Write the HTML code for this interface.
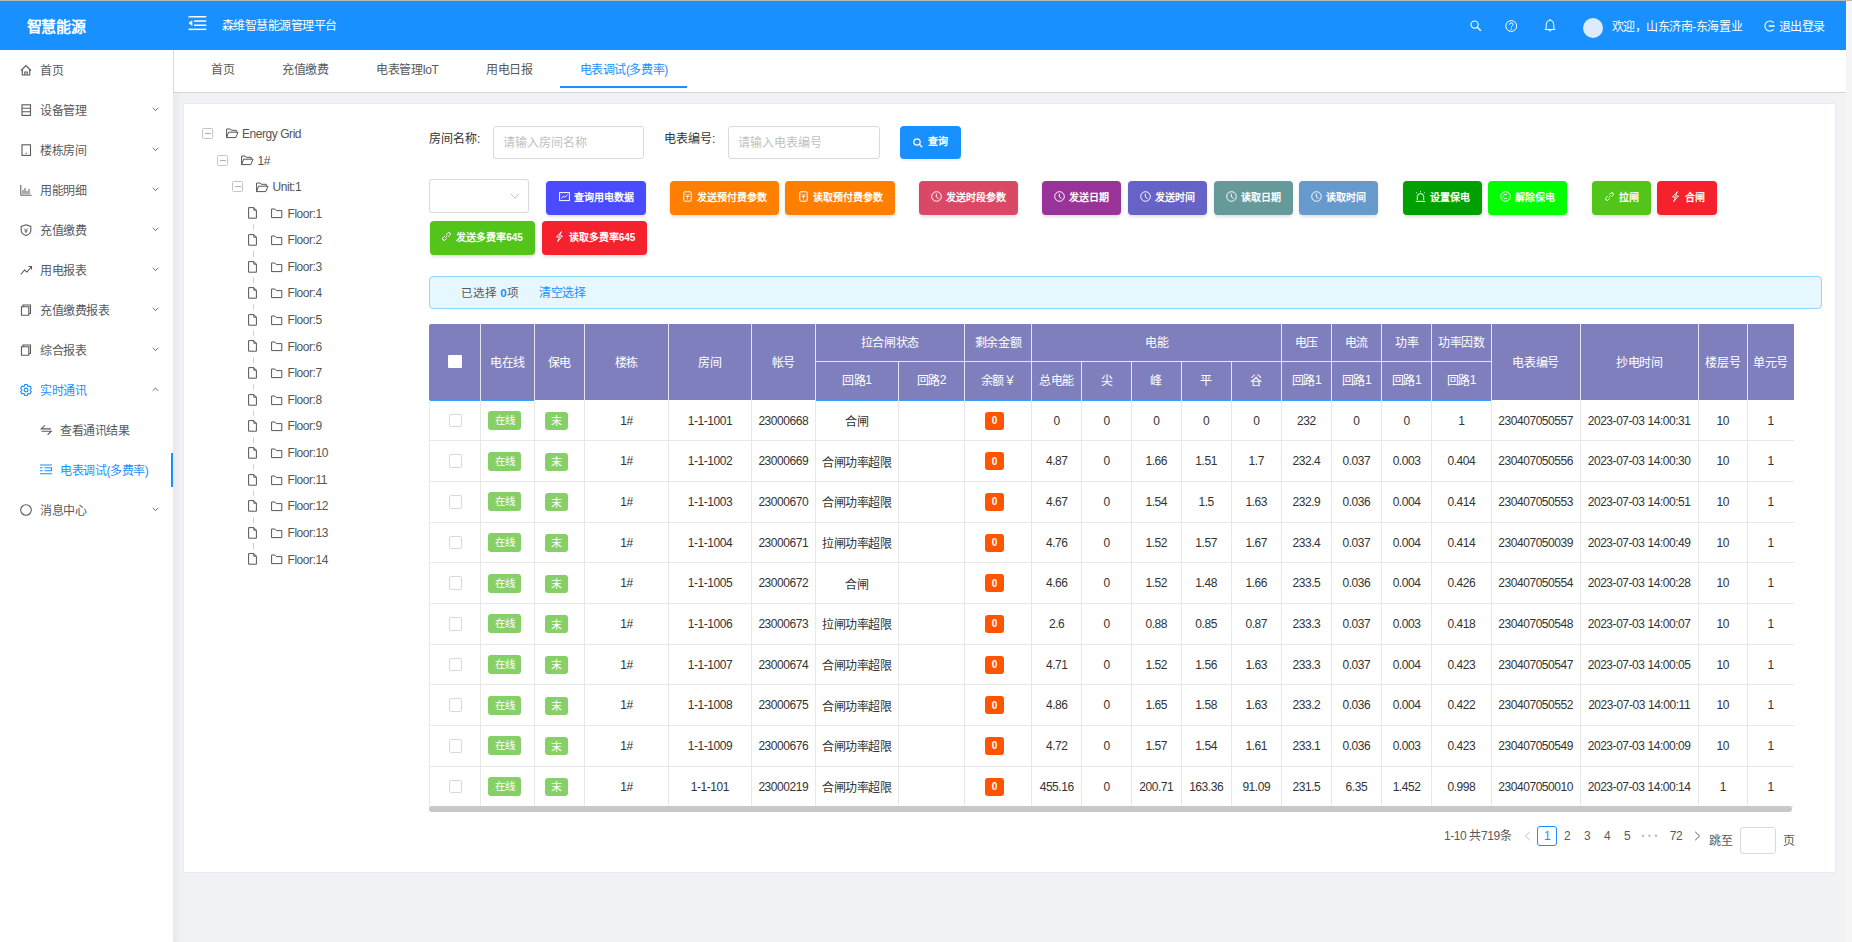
<!DOCTYPE html><html lang="zh-CN"><head><meta charset="utf-8"><style>
*{box-sizing:border-box;margin:0;padding:0}
html,body{width:1852px;height:942px;overflow:hidden;background:#f0f2f5;font-family:"Liberation Sans", sans-serif;}
.t{position:absolute;white-space:nowrap;}
.b{position:absolute;}
.ct{position:absolute;display:flex;align-items:center;justify-content:center;white-space:nowrap;}
svg{position:absolute;overflow:visible}
</style></head><body><div class="b" style="left:0px;top:0px;width:1852px;height:1px;background:#bdb8b3"></div>
<div class="b" style="left:1846px;top:1px;width:6px;height:941px;background:#f5f5f5"></div>
<div class="b" style="left:0px;top:1px;width:1846px;height:49px;background:#1890ff"></div>
<div class="t" style="left:26.5px;top:16.5px;font-size:15px;line-height:20px;color:#fff;font-weight:bold;letter-spacing:-0.3px">智慧能源</div>
<svg style="left:188px;top:15px" width="19" height="16" viewBox="0 0 19 16"><g fill="#fff"><rect x="0.5" y="1" width="17.8" height="1.5"/><rect x="6" y="5.3" width="12.3" height="1.5"/><rect x="6" y="9.5" width="12.3" height="1.5"/><rect x="0.5" y="13.6" width="17.8" height="1.5"/><path d="M0.5 8.1 L4.3 5.3 L4.3 10.9 Z"/></g></svg>
<div class="t" style="left:221.5px;top:16.0px;font-size:12px;line-height:20px;color:#fff;font-weight:normal;letter-spacing:-0.50px;">森维智慧能源管理平台</div>
<svg style="left:1470px;top:20px" width="12" height="12" viewBox="0 0 12 12"><circle cx="4.6" cy="4.6" r="3.6" fill="none" stroke="#fff" stroke-width="1.15"/><path d="M7.3 7.3 L10.8 10.8" stroke="#fff" stroke-width="1.3"/></svg>
<svg style="left:1504.5px;top:20px" width="13" height="13" viewBox="0 0 13 13"><circle cx="6.2" cy="6" r="5.4" fill="none" stroke="#fff" stroke-width="1"/><path d="M4.4 4.7 Q4.4 2.9 6.2 2.9 Q8 2.9 8 4.5 Q8 5.6 6.9 6.1 Q6.2 6.5 6.2 7.5" fill="none" stroke="#fff" stroke-width="1"/><circle cx="6.2" cy="9" r="0.65" fill="#fff"/></svg>
<svg style="left:1544px;top:19px" width="12" height="14" viewBox="0 0 12 14"><path d="M6 1 Q2.2 1.5 2.2 5.8 L2.2 9.3 L0.9 10.5 L11.1 10.5 L9.8 9.3 L9.8 5.8 Q9.8 1.5 6 1 Z" fill="none" stroke="#fff" stroke-width="1"/><path d="M4.6 11.3 Q6 12.8 7.4 11.3" fill="none" stroke="#fff" stroke-width="1"/><rect x="5.5" y="0" width="1" height="1.3" fill="#fff"/></svg>
<div class="b" style="left:1583px;top:18px;width:20.3px;height:20.3px;border-radius:50%;background:#dcebfd"></div>
<div class="t" style="left:1611.5px;top:16.5px;font-size:12px;line-height:20px;color:#fff;font-weight:normal;letter-spacing:-0.45px;">欢迎，山东济南<span style="letter-spacing:-0.45px">-</span>东海置业</div>
<svg style="left:1764px;top:20px" width="12" height="12" viewBox="0 0 12 12"><path d="M9.6 2.6 A5 5 0 1 0 9.6 9.4" fill="none" stroke="#fff" stroke-width="1.1"/><path d="M5.3 6 L10.2 6" fill="none" stroke="#fff" stroke-width="1.5" stroke-linecap="round"/></svg>
<div class="t" style="left:1778.5px;top:16.5px;font-size:12px;line-height:20px;color:#fff;font-weight:normal;letter-spacing:-0.40px;">退出登录</div>
<div class="b" style="left:0px;top:50px;width:173px;height:892px;background:#fff"></div>
<svg style="left:20px;top:63.5px" width="12" height="12" viewBox="0 0 12 12"><path d="M1 6.5 L6 1.5 L11 6.5 M2.3 5.3 L2.3 11 L9.7 11 L9.7 5.3 M4.8 11 L4.8 8 L7.2 8 L7.2 11" fill="none" stroke="#595959" stroke-width="1.1"/></svg>
<div class="t" style="left:40px;top:60.5px;font-size:12px;line-height:20px;color:#595959;font-weight:normal;letter-spacing:-0.40px;">首页</div>
<svg style="left:20px;top:103.5px" width="12" height="12" viewBox="0 0 12 12"><rect x="2" y="0.8" width="8.5" height="10.6" fill="none" stroke="#595959" stroke-width="1.1"/><path d="M2 4.3 L10.5 4.3 M2 7.8 L10.5 7.8" stroke="#595959" stroke-width="1.1"/></svg>
<div class="t" style="left:40px;top:100.5px;font-size:12px;line-height:20px;color:#595959;font-weight:normal;letter-spacing:-0.40px;">设备管理</div>
<svg style="left:151.5px;top:107.0px" width="7" height="5" viewBox="0 0 7 5"><path d="M0.7 0.8 L3.5 3.6 L6.3 0.8" fill="none" stroke="#595959" stroke-width="0.9"/></svg>
<svg style="left:20px;top:143.5px" width="12" height="12" viewBox="0 0 12 12"><rect x="2" y="0.8" width="8.5" height="10.6" fill="none" stroke="#595959" stroke-width="1.1"/><path d="M5.6 9.3 L6.9 9.3" stroke="#595959" stroke-width="1"/></svg>
<div class="t" style="left:40px;top:140.5px;font-size:12px;line-height:20px;color:#595959;font-weight:normal;letter-spacing:-0.40px;">楼栋房间</div>
<svg style="left:151.5px;top:147.0px" width="7" height="5" viewBox="0 0 7 5"><path d="M0.7 0.8 L3.5 3.6 L6.3 0.8" fill="none" stroke="#595959" stroke-width="0.9"/></svg>
<svg style="left:20px;top:183.5px" width="12" height="12" viewBox="0 0 12 12"><path d="M0.8 1 L0.8 11.2 L11.5 11.2 M3 6 L3 10 M5 4 L5 10 M7 7 L7 10 M9 5 L9 10" fill="none" stroke="#595959" stroke-width="1"/></svg>
<div class="t" style="left:40px;top:180.5px;font-size:12px;line-height:20px;color:#595959;font-weight:normal;letter-spacing:-0.40px;">用能明细</div>
<svg style="left:151.5px;top:187.0px" width="7" height="5" viewBox="0 0 7 5"><path d="M0.7 0.8 L3.5 3.6 L6.3 0.8" fill="none" stroke="#595959" stroke-width="0.9"/></svg>
<svg style="left:20px;top:223.5px" width="12" height="12" viewBox="0 0 12 12"><path d="M6 0.8 L10.8 2.5 L10.8 6.5 Q10.8 10 6 11.5 Q1.2 10 1.2 6.5 L1.2 2.5 Z" fill="none" stroke="#595959" stroke-width="1.1"/><path d="M4.3 4.5 L6 6.5 L7.7 4.5 M4.5 7 L7.5 7 M6 6.5 L6 9" fill="none" stroke="#595959" stroke-width="0.9"/></svg>
<div class="t" style="left:40px;top:220.5px;font-size:12px;line-height:20px;color:#595959;font-weight:normal;letter-spacing:-0.40px;">充值缴费</div>
<svg style="left:151.5px;top:227.0px" width="7" height="5" viewBox="0 0 7 5"><path d="M0.7 0.8 L3.5 3.6 L6.3 0.8" fill="none" stroke="#595959" stroke-width="0.9"/></svg>
<svg style="left:20px;top:263.5px" width="12" height="12" viewBox="0 0 12 12"><path d="M0.8 10.5 L4.5 6 L7 8 L11.5 2.5 M8.5 2.5 L11.5 2.5 L11.5 5.5" fill="none" stroke="#595959" stroke-width="1.1"/></svg>
<div class="t" style="left:40px;top:260.5px;font-size:12px;line-height:20px;color:#595959;font-weight:normal;letter-spacing:-0.40px;">用电报表</div>
<svg style="left:151.5px;top:267.0px" width="7" height="5" viewBox="0 0 7 5"><path d="M0.7 0.8 L3.5 3.6 L6.3 0.8" fill="none" stroke="#595959" stroke-width="0.9"/></svg>
<svg style="left:20px;top:303.5px" width="12" height="12" viewBox="0 0 12 12"><path d="M3 2.5 L3 1 L10.5 1 L10.5 9.5 L9 9.5 M1.5 2.8 L8.8 2.8 L8.8 11.3 L1.5 11.3 Z" fill="none" stroke="#595959" stroke-width="1.1"/></svg>
<div class="t" style="left:40px;top:300.5px;font-size:12px;line-height:20px;color:#595959;font-weight:normal;letter-spacing:-0.40px;">充值缴费报表</div>
<svg style="left:151.5px;top:307.0px" width="7" height="5" viewBox="0 0 7 5"><path d="M0.7 0.8 L3.5 3.6 L6.3 0.8" fill="none" stroke="#595959" stroke-width="0.9"/></svg>
<svg style="left:20px;top:343.5px" width="12" height="12" viewBox="0 0 12 12"><path d="M3 2.5 L3 1 L10.5 1 L10.5 9.5 L9 9.5 M1.5 2.8 L8.8 2.8 L8.8 11.3 L1.5 11.3 Z" fill="none" stroke="#595959" stroke-width="1.1"/></svg>
<div class="t" style="left:40px;top:340.5px;font-size:12px;line-height:20px;color:#595959;font-weight:normal;letter-spacing:-0.40px;">综合报表</div>
<svg style="left:151.5px;top:347.0px" width="7" height="5" viewBox="0 0 7 5"><path d="M0.7 0.8 L3.5 3.6 L6.3 0.8" fill="none" stroke="#595959" stroke-width="0.9"/></svg>
<svg style="left:20px;top:383.5px" width="12" height="12" viewBox="0 0 12 12"><path d="M4.29 2.16 L4.65 0.57 L7.35 0.57 L7.71 2.16 L8.47 2.60 L10.03 2.11 L11.38 4.46 L10.18 5.56 L10.18 6.44 L11.38 7.54 L10.03 9.89 L8.47 9.40 L7.71 9.84 L7.35 11.43 L4.65 11.43 L4.29 9.84 L3.53 9.40 L1.97 9.89 L0.62 7.54 L1.82 6.44 L1.82 5.56 L0.62 4.46 L1.97 2.11 L3.53 2.60 Z" fill="none" stroke="#1890ff" stroke-width="1.1" stroke-linejoin="round"/><circle cx="6" cy="6" r="1.9" fill="none" stroke="#1890ff" stroke-width="1.1"/></svg>
<div class="t" style="left:40px;top:380.5px;font-size:12px;line-height:20px;color:#1890ff;font-weight:normal;letter-spacing:-0.40px;">实时通讯</div>
<svg style="left:151.5px;top:387.0px" width="7" height="5" viewBox="0 0 7 5"><path d="M0.7 3.8 L3.5 1 L6.3 3.8" fill="none" stroke="#595959" stroke-width="0.9"/></svg>
<svg style="left:20px;top:503.5px" width="12" height="12" viewBox="0 0 12 12"><circle cx="6" cy="6" r="5.3" fill="none" stroke="#595959" stroke-width="1.1"/></svg>
<div class="t" style="left:40px;top:500.5px;font-size:12px;line-height:20px;color:#595959;font-weight:normal;letter-spacing:-0.40px;">消息中心</div>
<svg style="left:151.5px;top:507.0px" width="7" height="5" viewBox="0 0 7 5"><path d="M0.7 0.8 L3.5 3.6 L6.3 0.8" fill="none" stroke="#595959" stroke-width="0.9"/></svg>
<svg style="left:41px;top:425px" width="11" height="11" viewBox="0 0 11 11"><path d="M3.8 0.3 L0.3 3.9 L10 3.9 M0.5 6.2 L10.3 6.2 L6.6 9.8" fill="none" stroke="#595959" stroke-width="1.1"/></svg>
<div class="t" style="left:60px;top:420.5px;font-size:12px;line-height:20px;color:#595959;font-weight:normal;letter-spacing:-0.40px;">查看通讯结果</div>
<svg style="left:40px;top:464px" width="12" height="12" viewBox="0 0 12 12"><path d="M0 1 L12 1 M0 3.8 L2.5 3.8 M4.5 3.8 L11.5 3.8 L11.5 6.8 L4.5 6.8 M0 6.8 L2.5 6.8 M0 9.8 L12 9.8" fill="none" stroke="#1890ff" stroke-width="1.1"/></svg>
<div class="t" style="left:60px;top:460.5px;font-size:12px;line-height:20px;color:#1890ff;font-weight:normal;letter-spacing:-0.40px;">电表调试(多费率)</div>
<div class="b" style="left:171px;top:453px;width:2px;height:34px;background:#1890ff"></div>
<div class="b" style="left:173px;top:50px;width:1673px;height:43px;background:#fff;border-left:1px solid #d9d9d9;border-bottom:1px solid #d4d4d4"></div>
<div class="t" style="left:211px;top:59.5px;font-size:12px;line-height:20px;color:#595959;font-weight:normal;letter-spacing:-0.40px;">首页</div>
<div class="t" style="left:282px;top:59.5px;font-size:12px;line-height:20px;color:#595959;font-weight:normal;letter-spacing:-0.40px;">充值缴费</div>
<div class="t" style="left:376px;top:59.5px;font-size:12px;line-height:20px;color:#595959;font-weight:normal;letter-spacing:-0.40px;">电表管理<span style="letter-spacing:-0.45px">IoT</span></div>
<div class="t" style="left:486px;top:59.5px;font-size:12px;line-height:20px;color:#595959;font-weight:normal;letter-spacing:-0.40px;">用电日报</div>
<div class="t" style="left:579.5px;top:59.5px;font-size:12px;line-height:20px;color:#1890ff;font-weight:normal;letter-spacing:-0.40px;">电表调试(多费率)</div>
<div class="b" style="left:560px;top:86px;width:127px;height:1.5px;background:#1890ff"></div>
<div class="b" style="left:183px;top:103px;width:1653px;height:770px;background:#fff;border:1px solid #ebebeb"></div>
<div class="b" style="left:173px;top:93px;width:8px;height:849px;background:linear-gradient(90deg, rgba(0,20,40,0.045), rgba(0,20,40,0))"></div>
<div class="b" style="left:202px;top:127.5px;width:11px;height:11px;border:1px solid #c4c4c4;border-radius:1.5px;background:#fff"></div>
<div class="b" style="left:204.5px;top:132.5px;width:6px;height:1px;background:#b0b0b0"></div>
<svg style="left:225.5px;top:128px" width="13" height="11" viewBox="0 0 13 11"><path d="M0.6 9.6 L0.6 1 L4.3 1 L5.3 2.3 L10.2 2.3 L10.2 4.2 M0.6 9.6 L2.6 4.2 L12 4.2 L9.8 9.6 Z" fill="none" stroke="#555" stroke-width="1"/></svg>
<div class="t" style="left:242px;top:124.0px;font-size:12px;line-height:20px;color:#555;font-weight:normal;"><span style="letter-spacing:-0.45px">Energy Grid</span></div>
<div class="b" style="left:217px;top:154.5px;width:11px;height:11px;border:1px solid #c4c4c4;border-radius:1.5px;background:#fff"></div>
<div class="b" style="left:219.5px;top:159.5px;width:6px;height:1px;background:#b0b0b0"></div>
<svg style="left:241px;top:155px" width="13" height="11" viewBox="0 0 13 11"><path d="M0.6 9.6 L0.6 1 L4.3 1 L5.3 2.3 L10.2 2.3 L10.2 4.2 M0.6 9.6 L2.6 4.2 L12 4.2 L9.8 9.6 Z" fill="none" stroke="#555" stroke-width="1"/></svg>
<div class="t" style="left:257.5px;top:150.5px;font-size:12px;line-height:20px;color:#555;font-weight:normal;"><span style="letter-spacing:-0.45px">1#</span></div>
<div class="b" style="left:232px;top:181px;width:11px;height:11px;border:1px solid #c4c4c4;border-radius:1.5px;background:#fff"></div>
<div class="b" style="left:234.5px;top:186px;width:6px;height:1px;background:#b0b0b0"></div>
<svg style="left:256px;top:181.5px" width="13" height="11" viewBox="0 0 13 11"><path d="M0.6 9.6 L0.6 1 L4.3 1 L5.3 2.3 L10.2 2.3 L10.2 4.2 M0.6 9.6 L2.6 4.2 L12 4.2 L9.8 9.6 Z" fill="none" stroke="#555" stroke-width="1"/></svg>
<div class="t" style="left:272.5px;top:177.0px;font-size:12px;line-height:20px;color:#555;font-weight:normal;"><span style="letter-spacing:-0.45px">Unit:1</span></div>
<svg style="left:248px;top:207.3px" width="9" height="12" viewBox="0 0 9 12"><path d="M0.6 0.6 L5.8 0.6 L8.4 3.2 L8.4 11.2 L0.6 11.2 Z M5.8 0.6 L5.8 3.2 L8.4 3.2" fill="none" stroke="#555" stroke-width="1"/></svg>
<svg style="left:271px;top:208.3px" width="12" height="11" viewBox="0 0 12 11"><path d="M0.6 9.6 L0.6 1 L3.8 1 L5.4 2.6 L10.8 2.6 L10.8 9.6 Z" fill="none" stroke="#555" stroke-width="1"/></svg>
<div class="t" style="left:287.5px;top:203.5px;font-size:12px;line-height:20px;color:#555;font-weight:normal;"><span style="letter-spacing:-0.45px">Floor:1</span></div>
<div class="b" style="left:253px;top:224.0px;width:1px;height:6px;background:#d0d0d0"></div>
<svg style="left:248px;top:233.92000000000002px" width="9" height="12" viewBox="0 0 9 12"><path d="M0.6 0.6 L5.8 0.6 L8.4 3.2 L8.4 11.2 L0.6 11.2 Z M5.8 0.6 L5.8 3.2 L8.4 3.2" fill="none" stroke="#555" stroke-width="1"/></svg>
<svg style="left:271px;top:234.92000000000002px" width="12" height="11" viewBox="0 0 12 11"><path d="M0.6 9.6 L0.6 1 L3.8 1 L5.4 2.6 L10.8 2.6 L10.8 9.6 Z" fill="none" stroke="#555" stroke-width="1"/></svg>
<div class="t" style="left:287.5px;top:230.12px;font-size:12px;line-height:20px;color:#555;font-weight:normal;"><span style="letter-spacing:-0.45px">Floor:2</span></div>
<div class="b" style="left:253px;top:250.62px;width:1px;height:6px;background:#d0d0d0"></div>
<svg style="left:248px;top:260.54px" width="9" height="12" viewBox="0 0 9 12"><path d="M0.6 0.6 L5.8 0.6 L8.4 3.2 L8.4 11.2 L0.6 11.2 Z M5.8 0.6 L5.8 3.2 L8.4 3.2" fill="none" stroke="#555" stroke-width="1"/></svg>
<svg style="left:271px;top:261.54px" width="12" height="11" viewBox="0 0 12 11"><path d="M0.6 9.6 L0.6 1 L3.8 1 L5.4 2.6 L10.8 2.6 L10.8 9.6 Z" fill="none" stroke="#555" stroke-width="1"/></svg>
<div class="t" style="left:287.5px;top:256.74px;font-size:12px;line-height:20px;color:#555;font-weight:normal;"><span style="letter-spacing:-0.45px">Floor:3</span></div>
<div class="b" style="left:253px;top:277.24px;width:1px;height:6px;background:#d0d0d0"></div>
<svg style="left:248px;top:287.16px" width="9" height="12" viewBox="0 0 9 12"><path d="M0.6 0.6 L5.8 0.6 L8.4 3.2 L8.4 11.2 L0.6 11.2 Z M5.8 0.6 L5.8 3.2 L8.4 3.2" fill="none" stroke="#555" stroke-width="1"/></svg>
<svg style="left:271px;top:288.16px" width="12" height="11" viewBox="0 0 12 11"><path d="M0.6 9.6 L0.6 1 L3.8 1 L5.4 2.6 L10.8 2.6 L10.8 9.6 Z" fill="none" stroke="#555" stroke-width="1"/></svg>
<div class="t" style="left:287.5px;top:283.36px;font-size:12px;line-height:20px;color:#555;font-weight:normal;"><span style="letter-spacing:-0.45px">Floor:4</span></div>
<div class="b" style="left:253px;top:303.86px;width:1px;height:6px;background:#d0d0d0"></div>
<svg style="left:248px;top:313.78000000000003px" width="9" height="12" viewBox="0 0 9 12"><path d="M0.6 0.6 L5.8 0.6 L8.4 3.2 L8.4 11.2 L0.6 11.2 Z M5.8 0.6 L5.8 3.2 L8.4 3.2" fill="none" stroke="#555" stroke-width="1"/></svg>
<svg style="left:271px;top:314.78000000000003px" width="12" height="11" viewBox="0 0 12 11"><path d="M0.6 9.6 L0.6 1 L3.8 1 L5.4 2.6 L10.8 2.6 L10.8 9.6 Z" fill="none" stroke="#555" stroke-width="1"/></svg>
<div class="t" style="left:287.5px;top:309.98px;font-size:12px;line-height:20px;color:#555;font-weight:normal;"><span style="letter-spacing:-0.45px">Floor:5</span></div>
<div class="b" style="left:253px;top:330.48px;width:1px;height:6px;background:#d0d0d0"></div>
<svg style="left:248px;top:340.40000000000003px" width="9" height="12" viewBox="0 0 9 12"><path d="M0.6 0.6 L5.8 0.6 L8.4 3.2 L8.4 11.2 L0.6 11.2 Z M5.8 0.6 L5.8 3.2 L8.4 3.2" fill="none" stroke="#555" stroke-width="1"/></svg>
<svg style="left:271px;top:341.40000000000003px" width="12" height="11" viewBox="0 0 12 11"><path d="M0.6 9.6 L0.6 1 L3.8 1 L5.4 2.6 L10.8 2.6 L10.8 9.6 Z" fill="none" stroke="#555" stroke-width="1"/></svg>
<div class="t" style="left:287.5px;top:336.6px;font-size:12px;line-height:20px;color:#555;font-weight:normal;"><span style="letter-spacing:-0.45px">Floor:6</span></div>
<div class="b" style="left:253px;top:357.1px;width:1px;height:6px;background:#d0d0d0"></div>
<svg style="left:248px;top:367.02000000000004px" width="9" height="12" viewBox="0 0 9 12"><path d="M0.6 0.6 L5.8 0.6 L8.4 3.2 L8.4 11.2 L0.6 11.2 Z M5.8 0.6 L5.8 3.2 L8.4 3.2" fill="none" stroke="#555" stroke-width="1"/></svg>
<svg style="left:271px;top:368.02000000000004px" width="12" height="11" viewBox="0 0 12 11"><path d="M0.6 9.6 L0.6 1 L3.8 1 L5.4 2.6 L10.8 2.6 L10.8 9.6 Z" fill="none" stroke="#555" stroke-width="1"/></svg>
<div class="t" style="left:287.5px;top:363.22px;font-size:12px;line-height:20px;color:#555;font-weight:normal;"><span style="letter-spacing:-0.45px">Floor:7</span></div>
<div class="b" style="left:253px;top:383.72px;width:1px;height:6px;background:#d0d0d0"></div>
<svg style="left:248px;top:393.64000000000004px" width="9" height="12" viewBox="0 0 9 12"><path d="M0.6 0.6 L5.8 0.6 L8.4 3.2 L8.4 11.2 L0.6 11.2 Z M5.8 0.6 L5.8 3.2 L8.4 3.2" fill="none" stroke="#555" stroke-width="1"/></svg>
<svg style="left:271px;top:394.64000000000004px" width="12" height="11" viewBox="0 0 12 11"><path d="M0.6 9.6 L0.6 1 L3.8 1 L5.4 2.6 L10.8 2.6 L10.8 9.6 Z" fill="none" stroke="#555" stroke-width="1"/></svg>
<div class="t" style="left:287.5px;top:389.84000000000003px;font-size:12px;line-height:20px;color:#555;font-weight:normal;"><span style="letter-spacing:-0.45px">Floor:8</span></div>
<div class="b" style="left:253px;top:410.34000000000003px;width:1px;height:6px;background:#d0d0d0"></div>
<svg style="left:248px;top:420.26000000000005px" width="9" height="12" viewBox="0 0 9 12"><path d="M0.6 0.6 L5.8 0.6 L8.4 3.2 L8.4 11.2 L0.6 11.2 Z M5.8 0.6 L5.8 3.2 L8.4 3.2" fill="none" stroke="#555" stroke-width="1"/></svg>
<svg style="left:271px;top:421.26000000000005px" width="12" height="11" viewBox="0 0 12 11"><path d="M0.6 9.6 L0.6 1 L3.8 1 L5.4 2.6 L10.8 2.6 L10.8 9.6 Z" fill="none" stroke="#555" stroke-width="1"/></svg>
<div class="t" style="left:287.5px;top:416.46000000000004px;font-size:12px;line-height:20px;color:#555;font-weight:normal;"><span style="letter-spacing:-0.45px">Floor:9</span></div>
<div class="b" style="left:253px;top:436.96000000000004px;width:1px;height:6px;background:#d0d0d0"></div>
<svg style="left:248px;top:446.88000000000005px" width="9" height="12" viewBox="0 0 9 12"><path d="M0.6 0.6 L5.8 0.6 L8.4 3.2 L8.4 11.2 L0.6 11.2 Z M5.8 0.6 L5.8 3.2 L8.4 3.2" fill="none" stroke="#555" stroke-width="1"/></svg>
<svg style="left:271px;top:447.88000000000005px" width="12" height="11" viewBox="0 0 12 11"><path d="M0.6 9.6 L0.6 1 L3.8 1 L5.4 2.6 L10.8 2.6 L10.8 9.6 Z" fill="none" stroke="#555" stroke-width="1"/></svg>
<div class="t" style="left:287.5px;top:443.08000000000004px;font-size:12px;line-height:20px;color:#555;font-weight:normal;"><span style="letter-spacing:-0.45px">Floor:10</span></div>
<div class="b" style="left:253px;top:463.58000000000004px;width:1px;height:6px;background:#d0d0d0"></div>
<svg style="left:248px;top:473.5px" width="9" height="12" viewBox="0 0 9 12"><path d="M0.6 0.6 L5.8 0.6 L8.4 3.2 L8.4 11.2 L0.6 11.2 Z M5.8 0.6 L5.8 3.2 L8.4 3.2" fill="none" stroke="#555" stroke-width="1"/></svg>
<svg style="left:271px;top:474.5px" width="12" height="11" viewBox="0 0 12 11"><path d="M0.6 9.6 L0.6 1 L3.8 1 L5.4 2.6 L10.8 2.6 L10.8 9.6 Z" fill="none" stroke="#555" stroke-width="1"/></svg>
<div class="t" style="left:287.5px;top:469.7px;font-size:12px;line-height:20px;color:#555;font-weight:normal;"><span style="letter-spacing:-0.45px">Floor:11</span></div>
<div class="b" style="left:253px;top:490.2px;width:1px;height:6px;background:#d0d0d0"></div>
<svg style="left:248px;top:500.12px" width="9" height="12" viewBox="0 0 9 12"><path d="M0.6 0.6 L5.8 0.6 L8.4 3.2 L8.4 11.2 L0.6 11.2 Z M5.8 0.6 L5.8 3.2 L8.4 3.2" fill="none" stroke="#555" stroke-width="1"/></svg>
<svg style="left:271px;top:501.12px" width="12" height="11" viewBox="0 0 12 11"><path d="M0.6 9.6 L0.6 1 L3.8 1 L5.4 2.6 L10.8 2.6 L10.8 9.6 Z" fill="none" stroke="#555" stroke-width="1"/></svg>
<div class="t" style="left:287.5px;top:496.32px;font-size:12px;line-height:20px;color:#555;font-weight:normal;"><span style="letter-spacing:-0.45px">Floor:12</span></div>
<div class="b" style="left:253px;top:516.8199999999999px;width:1px;height:6px;background:#d0d0d0"></div>
<svg style="left:248px;top:526.74px" width="9" height="12" viewBox="0 0 9 12"><path d="M0.6 0.6 L5.8 0.6 L8.4 3.2 L8.4 11.2 L0.6 11.2 Z M5.8 0.6 L5.8 3.2 L8.4 3.2" fill="none" stroke="#555" stroke-width="1"/></svg>
<svg style="left:271px;top:527.74px" width="12" height="11" viewBox="0 0 12 11"><path d="M0.6 9.6 L0.6 1 L3.8 1 L5.4 2.6 L10.8 2.6 L10.8 9.6 Z" fill="none" stroke="#555" stroke-width="1"/></svg>
<div class="t" style="left:287.5px;top:522.94px;font-size:12px;line-height:20px;color:#555;font-weight:normal;"><span style="letter-spacing:-0.45px">Floor:13</span></div>
<div class="b" style="left:253px;top:543.44px;width:1px;height:6px;background:#d0d0d0"></div>
<svg style="left:248px;top:553.3599999999999px" width="9" height="12" viewBox="0 0 9 12"><path d="M0.6 0.6 L5.8 0.6 L8.4 3.2 L8.4 11.2 L0.6 11.2 Z M5.8 0.6 L5.8 3.2 L8.4 3.2" fill="none" stroke="#555" stroke-width="1"/></svg>
<svg style="left:271px;top:554.3599999999999px" width="12" height="11" viewBox="0 0 12 11"><path d="M0.6 9.6 L0.6 1 L3.8 1 L5.4 2.6 L10.8 2.6 L10.8 9.6 Z" fill="none" stroke="#555" stroke-width="1"/></svg>
<div class="t" style="left:287.5px;top:549.56px;font-size:12px;line-height:20px;color:#555;font-weight:normal;"><span style="letter-spacing:-0.45px">Floor:14</span></div>
<div class="t" style="left:429px;top:129.0px;font-size:12px;line-height:20px;color:#333;font-weight:normal;">房间名称<span style="letter-spacing:-0.45px">:</span></div>
<div class="b" style="left:493px;top:126px;width:151px;height:32.5px;border:1px solid #d9d9d9;border-radius:3px;background:#fff"></div>
<div class="t" style="left:503px;top:132.5px;font-size:12px;line-height:20px;color:#bfbfbf;font-weight:normal;">请输入房间名称</div>
<div class="t" style="left:664px;top:129.0px;font-size:12px;line-height:20px;color:#333;font-weight:normal;">电表编号<span style="letter-spacing:-0.45px">:</span></div>
<div class="b" style="left:728px;top:126px;width:152px;height:32.5px;border:1px solid #d9d9d9;border-radius:3px;background:#fff"></div>
<div class="t" style="left:738px;top:132.5px;font-size:12px;line-height:20px;color:#bfbfbf;font-weight:normal;">请输入电表编号</div>
<div class="b" style="left:900px;top:126px;width:61px;height:33px;background:#1890ff;border-radius:4px;box-shadow:0 2px 0 rgba(0,0,0,0.045)"></div>
<svg style="left:913px;top:137.5px" width="10" height="10" viewBox="0 0 10 10"><circle cx="4" cy="4" r="3.2" fill="none" stroke="#fff" stroke-width="1.2"/><path d="M6.3 6.3 L9.2 9.2" stroke="#fff" stroke-width="1.3"/></svg>
<div class="t" style="left:927.5px;top:131.5px;font-size:10px;line-height:20px;color:#fff;font-weight:bold;">查询</div>
<div class="b" style="left:429px;top:179px;width:100px;height:33.5px;border:1px solid #d9d9d9;border-radius:3px;background:#fff"></div>
<svg style="left:509.5px;top:192.5px" width="10" height="7" viewBox="0 0 10 7"><path d="M0.8 0.8 L4.8 5.2 L8.8 0.8" fill="none" stroke="#bfbfbf" stroke-width="1"/></svg>
<div class="b" style="left:546px;top:181.2px;width:100px;height:33.5px;background:#4a4aff;border-radius:4px;box-shadow:0 2px 3px rgba(0,0,0,0.12)"></div>
<div class="ct" style="left:546px;top:181.2px;width:100px;height:33.5px;font-size:10px;color:#fff;font-weight:bold;gap:4px;padding-bottom:3.5px"><svg style="position:static" width="11" height="11" viewBox="0 0 11 11"><rect x="0.6" y="1.6" width="9.8" height="8" fill="none" stroke="#fff" stroke-width="1"/><path d="M2.5 7.5 L4.5 5 L6 6.3 L8.5 3.5" fill="none" stroke="#fff" stroke-width="0.9"/></svg><span>查询用电数据</span></div>
<div class="b" style="left:670px;top:181.2px;width:109px;height:33.5px;background:#ff7f00;border-radius:4px;box-shadow:0 2px 3px rgba(0,0,0,0.12)"></div>
<div class="ct" style="left:670px;top:181.2px;width:109px;height:33.5px;font-size:10px;color:#fff;font-weight:bold;gap:4px;padding-bottom:3.5px"><svg style="position:static" width="11" height="11" viewBox="0 0 11 11"><rect x="1.8" y="0.8" width="7.4" height="9.4" rx="1" fill="none" stroke="#fff" stroke-width="1"/><path d="M3.7 3 L5.5 5 L7.3 3 M3.8 5.5 L7.2 5.5 M5.5 5 L5.5 8.5" fill="none" stroke="#fff" stroke-width="0.8"/></svg><span>发送预付费参数</span></div>
<div class="b" style="left:785px;top:181.2px;width:110px;height:33.5px;background:#ff7f00;border-radius:4px;box-shadow:0 2px 3px rgba(0,0,0,0.12)"></div>
<div class="ct" style="left:785px;top:181.2px;width:110px;height:33.5px;font-size:10px;color:#fff;font-weight:bold;gap:4px;padding-bottom:3.5px"><svg style="position:static" width="11" height="11" viewBox="0 0 11 11"><rect x="1.8" y="0.8" width="7.4" height="9.4" rx="1" fill="none" stroke="#fff" stroke-width="1"/><path d="M3.7 3 L5.5 5 L7.3 3 M3.8 5.5 L7.2 5.5 M5.5 5 L5.5 8.5" fill="none" stroke="#fff" stroke-width="0.8"/></svg><span>读取预付费参数</span></div>
<div class="b" style="left:919px;top:181.2px;width:99px;height:33.5px;background:#db4865;border-radius:4px;box-shadow:0 2px 3px rgba(0,0,0,0.12)"></div>
<div class="ct" style="left:919px;top:181.2px;width:99px;height:33.5px;font-size:10px;color:#fff;font-weight:bold;gap:4px;padding-bottom:3.5px"><svg style="position:static" width="11" height="11" viewBox="0 0 11 11"><circle cx="5.5" cy="5.5" r="4.8" fill="none" stroke="#fff" stroke-width="1"/><path d="M5.3 2.8 L5.3 5.8 L7.6 7.6" fill="none" stroke="#fff" stroke-width="1"/></svg><span>发送时段参数</span></div>
<div class="b" style="left:1042px;top:181.2px;width:79px;height:33.5px;background:#993399;border-radius:4px;box-shadow:0 2px 3px rgba(0,0,0,0.12)"></div>
<div class="ct" style="left:1042px;top:181.2px;width:79px;height:33.5px;font-size:10px;color:#fff;font-weight:bold;gap:4px;padding-bottom:3.5px"><svg style="position:static" width="11" height="11" viewBox="0 0 11 11"><circle cx="5.5" cy="5.5" r="4.8" fill="none" stroke="#fff" stroke-width="1"/><path d="M5.3 2.8 L5.3 5.8 L7.6 7.6" fill="none" stroke="#fff" stroke-width="1"/></svg><span>发送日期</span></div>
<div class="b" style="left:1128px;top:181.2px;width:79px;height:33.5px;background:#6762c8;border-radius:4px;box-shadow:0 2px 3px rgba(0,0,0,0.12)"></div>
<div class="ct" style="left:1128px;top:181.2px;width:79px;height:33.5px;font-size:10px;color:#fff;font-weight:bold;gap:4px;padding-bottom:3.5px"><svg style="position:static" width="11" height="11" viewBox="0 0 11 11"><circle cx="5.5" cy="5.5" r="4.8" fill="none" stroke="#fff" stroke-width="1"/><path d="M5.3 2.8 L5.3 5.8 L7.6 7.6" fill="none" stroke="#fff" stroke-width="1"/></svg><span>发送时间</span></div>
<div class="b" style="left:1214px;top:181.2px;width:79px;height:33.5px;background:#669999;border-radius:4px;box-shadow:0 2px 3px rgba(0,0,0,0.12)"></div>
<div class="ct" style="left:1214px;top:181.2px;width:79px;height:33.5px;font-size:10px;color:#fff;font-weight:bold;gap:4px;padding-bottom:3.5px"><svg style="position:static" width="11" height="11" viewBox="0 0 11 11"><circle cx="5.5" cy="5.5" r="4.8" fill="none" stroke="#fff" stroke-width="1"/><path d="M5.3 2.8 L5.3 5.8 L7.6 7.6" fill="none" stroke="#fff" stroke-width="1"/></svg><span>读取日期</span></div>
<div class="b" style="left:1299px;top:181.2px;width:79px;height:33.5px;background:#6699cc;border-radius:4px;box-shadow:0 2px 3px rgba(0,0,0,0.12)"></div>
<div class="ct" style="left:1299px;top:181.2px;width:79px;height:33.5px;font-size:10px;color:#fff;font-weight:bold;gap:4px;padding-bottom:3.5px"><svg style="position:static" width="11" height="11" viewBox="0 0 11 11"><circle cx="5.5" cy="5.5" r="4.8" fill="none" stroke="#fff" stroke-width="1"/><path d="M5.3 2.8 L5.3 5.8 L7.6 7.6" fill="none" stroke="#fff" stroke-width="1"/></svg><span>读取时间</span></div>
<div class="b" style="left:1403px;top:181.2px;width:79px;height:33.5px;background:#00a000;border-radius:4px;box-shadow:0 2px 3px rgba(0,0,0,0.12)"></div>
<div class="ct" style="left:1403px;top:181.2px;width:79px;height:33.5px;font-size:10px;color:#fff;font-weight:bold;gap:4px;padding-bottom:3.5px"><svg style="position:static" width="11" height="11" viewBox="0 0 11 11"><path d="M2.3 9.2 L2.3 5.6 Q2.3 2.6 5.5 2.6 Q8.7 2.6 8.7 5.6 L8.7 9.2 M0.8 10.4 L10.2 10.4 M5.5 0 L5.5 1.3 M1.2 1.5 L2.1 2.4 M9.8 1.5 L8.9 2.4" fill="none" stroke="#fff" stroke-width="1"/></svg><span>设置保电</span></div>
<div class="b" style="left:1488px;top:181.2px;width:79px;height:33.5px;background:#00ff00;border-radius:4px;box-shadow:0 2px 3px rgba(0,0,0,0.12)"></div>
<div class="ct" style="left:1488px;top:181.2px;width:79px;height:33.5px;font-size:10px;color:#fff;font-weight:bold;gap:4px;padding-bottom:3.5px"><svg style="position:static" width="11" height="11" viewBox="0 0 11 11"><circle cx="5.5" cy="5.5" r="4.8" fill="none" stroke="#fff" stroke-width="1"/><path d="M7.2 4 Q6.6 3.2 5.5 3.2 Q3.3 3.2 3.3 5.5 Q3.3 7.8 5.5 7.8 Q6.6 7.8 7.2 7" fill="none" stroke="#fff" stroke-width="1"/></svg><span>解除保电</span></div>
<div class="b" style="left:1592px;top:181.2px;width:59px;height:33.5px;background:#52c41a;border-radius:4px;box-shadow:0 2px 3px rgba(0,0,0,0.12)"></div>
<div class="ct" style="left:1592px;top:181.2px;width:59px;height:33.5px;font-size:10px;color:#fff;font-weight:bold;gap:4px;padding-bottom:3.5px"><svg style="position:static" width="11" height="11" viewBox="0 0 11 11"><path d="M4.6 6.4 L6.4 4.6 M3.8 5 L2 6.8 Q1 7.8 2 8.9 Q3.1 10 4.1 9 L5.9 7.2 M5 3.8 L6.8 2 Q7.8 1 8.9 2 Q10 3.1 9 4.1 L7.2 5.9" fill="none" stroke="#fff" stroke-width="1"/></svg><span>拉闸</span></div>
<div class="b" style="left:1657px;top:181.2px;width:60px;height:33.5px;background:#f5222d;border-radius:4px;box-shadow:0 2px 3px rgba(0,0,0,0.12)"></div>
<div class="ct" style="left:1657px;top:181.2px;width:60px;height:33.5px;font-size:10px;color:#fff;font-weight:bold;gap:4px;padding-bottom:3.5px"><svg style="position:static" width="11" height="11" viewBox="0 0 11 11"><path d="M7.5 0.5 L2.5 6 L5.5 6 L3.5 10.8 L8.5 5 L5.5 5 Z" fill="none" stroke="#fff" stroke-width="0.9"/></svg><span>合闸</span></div>
<div class="b" style="left:429.5px;top:221.2px;width:105px;height:33.5px;background:#52c41a;border-radius:4px;box-shadow:0 2px 3px rgba(0,0,0,0.12)"></div>
<div class="ct" style="left:429.5px;top:221.2px;width:105px;height:33.5px;font-size:10px;color:#fff;font-weight:bold;gap:4px;padding-bottom:3.5px"><svg style="position:static" width="11" height="11" viewBox="0 0 11 11"><path d="M4.6 6.4 L6.4 4.6 M3.8 5 L2 6.8 Q1 7.8 2 8.9 Q3.1 10 4.1 9 L5.9 7.2 M5 3.8 L6.8 2 Q7.8 1 8.9 2 Q10 3.1 9 4.1 L7.2 5.9" fill="none" stroke="#fff" stroke-width="1"/></svg><span>发送多费率645</span></div>
<div class="b" style="left:542px;top:221.2px;width:105px;height:33.5px;background:#f5222d;border-radius:4px;box-shadow:0 2px 3px rgba(0,0,0,0.12)"></div>
<div class="ct" style="left:542px;top:221.2px;width:105px;height:33.5px;font-size:10px;color:#fff;font-weight:bold;gap:4px;padding-bottom:3.5px"><svg style="position:static" width="11" height="11" viewBox="0 0 11 11"><path d="M7.5 0.5 L2.5 6 L5.5 6 L3.5 10.8 L8.5 5 L5.5 5 Z" fill="none" stroke="#fff" stroke-width="0.9"/></svg><span>读取多费率645</span></div>
<div class="b" style="left:429px;top:276px;width:1393px;height:33px;background:#e6f7ff;border:1px solid #91d5ff;border-radius:4px"></div>
<div class="t" style="left:461px;top:282.5px;font-size:11.6px;line-height:20px;color:#595959">已选择 <b style="color:#1890ff;font-weight:bold">0</b>项</div>
<div class="t" style="left:539px;top:282.5px;font-size:12px;line-height:20px;color:#1890ff;font-weight:normal;letter-spacing:-0.40px;">清空选择</div>
<div class="b" style="left:429px;top:324px;width:1365px;height:76.19999999999999px;background:#7f7fbd;border-radius:2px 0 0 0"></div>
<div class="b" style="left:480.0px;top:324px;width:1px;height:76.19999999999999px;background:#e6e6ee"></div>
<div class="b" style="left:534.0px;top:324px;width:1px;height:76.19999999999999px;background:#e6e6ee"></div>
<div class="b" style="left:584.0px;top:324px;width:1px;height:76.19999999999999px;background:#e6e6ee"></div>
<div class="b" style="left:668.0px;top:324px;width:1px;height:76.19999999999999px;background:#e6e6ee"></div>
<div class="b" style="left:750.8px;top:324px;width:1px;height:76.19999999999999px;background:#e6e6ee"></div>
<div class="b" style="left:814.8px;top:324px;width:1px;height:76.19999999999999px;background:#e6e6ee"></div>
<div class="b" style="left:897.7px;top:361.7px;width:1px;height:38.5px;background:#e6e6ee"></div>
<div class="b" style="left:963.8px;top:324px;width:1px;height:76.19999999999999px;background:#e6e6ee"></div>
<div class="b" style="left:1031.1px;top:324px;width:1px;height:76.19999999999999px;background:#e6e6ee"></div>
<div class="b" style="left:1081.3px;top:361.7px;width:1px;height:38.5px;background:#e6e6ee"></div>
<div class="b" style="left:1130.8px;top:361.7px;width:1px;height:38.5px;background:#e6e6ee"></div>
<div class="b" style="left:1180.7px;top:361.7px;width:1px;height:38.5px;background:#e6e6ee"></div>
<div class="b" style="left:1230.6px;top:361.7px;width:1px;height:38.5px;background:#e6e6ee"></div>
<div class="b" style="left:1281.0px;top:324px;width:1px;height:76.19999999999999px;background:#e6e6ee"></div>
<div class="b" style="left:1330.9px;top:324px;width:1px;height:76.19999999999999px;background:#e6e6ee"></div>
<div class="b" style="left:1380.9px;top:324px;width:1px;height:76.19999999999999px;background:#e6e6ee"></div>
<div class="b" style="left:1431.2px;top:324px;width:1px;height:76.19999999999999px;background:#e6e6ee"></div>
<div class="b" style="left:1490.5px;top:324px;width:1px;height:76.19999999999999px;background:#e6e6ee"></div>
<div class="b" style="left:1579.8px;top:324px;width:1px;height:76.19999999999999px;background:#e6e6ee"></div>
<div class="b" style="left:1697.5px;top:324px;width:1px;height:76.19999999999999px;background:#e6e6ee"></div>
<div class="b" style="left:1747.1px;top:324px;width:1px;height:76.19999999999999px;background:#e6e6ee"></div>
<div class="b" style="left:815.3px;top:361.2px;width:675.7px;height:1px;background:#e6e6ee"></div>
<div class="ct" style="left:480.5px;top:323.6px;width:54.0px;height:76.19999999999999px;font-size:12px;color:#fff;font-weight:normal;letter-spacing:-0.40px;">电在线</div>
<div class="ct" style="left:534.5px;top:323.6px;width:50.0px;height:76.19999999999999px;font-size:12px;color:#fff;font-weight:normal;letter-spacing:-0.40px;">保电</div>
<div class="ct" style="left:584.5px;top:323.6px;width:84.0px;height:76.19999999999999px;font-size:12px;color:#fff;font-weight:normal;letter-spacing:-0.40px;">楼栋</div>
<div class="ct" style="left:668.5px;top:323.6px;width:82.79999999999995px;height:76.19999999999999px;font-size:12px;color:#fff;font-weight:normal;letter-spacing:-0.40px;">房间</div>
<div class="ct" style="left:751.3px;top:323.6px;width:64.0px;height:76.19999999999999px;font-size:12px;color:#fff;font-weight:normal;letter-spacing:-0.40px;">帐号</div>
<div class="ct" style="left:1491px;top:323.6px;width:89.29999999999995px;height:76.19999999999999px;font-size:12px;color:#fff;font-weight:normal;letter-spacing:-0.40px;">电表编号</div>
<div class="ct" style="left:1580.3px;top:323.6px;width:117.70000000000005px;height:76.19999999999999px;font-size:12px;color:#fff;font-weight:normal;letter-spacing:-0.40px;">抄电时间</div>
<div class="ct" style="left:1698px;top:323.6px;width:49.59999999999991px;height:76.19999999999999px;font-size:12px;color:#fff;font-weight:normal;letter-spacing:-0.40px;">楼层号</div>
<div class="ct" style="left:1747.6px;top:323.6px;width:45.90000000000009px;height:76.19999999999999px;font-size:12px;color:#fff;font-weight:normal;letter-spacing:-0.40px;">单元号</div>
<div class="b" style="left:448px;top:355px;width:14px;height:13px;background:#fff;border-radius:1px"></div>
<div class="ct" style="left:815.3px;top:322.7px;width:149.0px;height:37.69999999999999px;font-size:12px;color:#fff;font-weight:normal;letter-spacing:-0.40px;">拉合闸状态</div>
<div class="ct" style="left:964.3px;top:322.7px;width:67.29999999999995px;height:37.69999999999999px;font-size:12px;color:#fff;font-weight:normal;letter-spacing:-0.40px;">剩余金额</div>
<div class="ct" style="left:1031.6px;top:322.7px;width:249.9000000000001px;height:37.69999999999999px;font-size:12px;color:#fff;font-weight:normal;letter-spacing:-0.40px;">电能</div>
<div class="ct" style="left:1281.5px;top:322.7px;width:49.90000000000009px;height:37.69999999999999px;font-size:12px;color:#fff;font-weight:normal;letter-spacing:-0.40px;">电压</div>
<div class="ct" style="left:1331.4px;top:322.7px;width:50.0px;height:37.69999999999999px;font-size:12px;color:#fff;font-weight:normal;letter-spacing:-0.40px;">电流</div>
<div class="ct" style="left:1381.4px;top:322.7px;width:50.299999999999955px;height:37.69999999999999px;font-size:12px;color:#fff;font-weight:normal;letter-spacing:-0.40px;">功率</div>
<div class="ct" style="left:1431.7px;top:322.7px;width:59.299999999999955px;height:37.69999999999999px;font-size:12px;color:#fff;font-weight:normal;letter-spacing:-0.40px;">功率因数</div>
<div class="ct" style="left:815.3px;top:360.4px;width:82.90000000000009px;height:38.5px;font-size:12px;color:#fff;font-weight:normal;letter-spacing:-0.40px;">回路<span style="letter-spacing:-0.45px">1</span></div>
<div class="ct" style="left:898.2px;top:360.4px;width:66.09999999999991px;height:38.5px;font-size:12px;color:#fff;font-weight:normal;letter-spacing:-0.40px;">回路<span style="letter-spacing:-0.45px">2</span></div>
<div class="ct" style="left:964.3px;top:360.4px;width:67.29999999999995px;height:38.5px;font-size:12px;color:#fff;font-weight:normal;letter-spacing:-0.40px;">余额￥</div>
<div class="ct" style="left:1031.6px;top:360.4px;width:50.200000000000045px;height:38.5px;font-size:12px;color:#fff;font-weight:normal;letter-spacing:-0.40px;">总电能</div>
<div class="ct" style="left:1081.8px;top:360.4px;width:49.5px;height:38.5px;font-size:12px;color:#fff;font-weight:normal;letter-spacing:-0.40px;">尖</div>
<div class="ct" style="left:1131.3px;top:360.4px;width:49.90000000000009px;height:38.5px;font-size:12px;color:#fff;font-weight:normal;letter-spacing:-0.40px;">峰</div>
<div class="ct" style="left:1181.2px;top:360.4px;width:49.899999999999864px;height:38.5px;font-size:12px;color:#fff;font-weight:normal;letter-spacing:-0.40px;">平</div>
<div class="ct" style="left:1231.1px;top:360.4px;width:50.40000000000009px;height:38.5px;font-size:12px;color:#fff;font-weight:normal;letter-spacing:-0.40px;">谷</div>
<div class="ct" style="left:1281.5px;top:360.4px;width:49.90000000000009px;height:38.5px;font-size:12px;color:#fff;font-weight:normal;letter-spacing:-0.40px;">回路<span style="letter-spacing:-0.45px">1</span></div>
<div class="ct" style="left:1331.4px;top:360.4px;width:50.0px;height:38.5px;font-size:12px;color:#fff;font-weight:normal;letter-spacing:-0.40px;">回路<span style="letter-spacing:-0.45px">1</span></div>
<div class="ct" style="left:1381.4px;top:360.4px;width:50.299999999999955px;height:38.5px;font-size:12px;color:#fff;font-weight:normal;letter-spacing:-0.40px;">回路<span style="letter-spacing:-0.45px">1</span></div>
<div class="ct" style="left:1431.7px;top:360.4px;width:59.299999999999955px;height:38.5px;font-size:12px;color:#fff;font-weight:normal;letter-spacing:-0.40px;">回路<span style="letter-spacing:-0.45px">1</span></div>
<div class="b" style="left:429px;top:400.2px;width:105.5px;height:1px;background:#3aa0ff"></div>
<div class="b" style="left:815.3px;top:400.2px;width:675.7px;height:1px;background:#3aa0ff"></div>
<div class="b" style="left:480.0px;top:400.2px;width:1px;height:406.7000000000001px;background:#e8e8e8"></div>
<div class="b" style="left:534.0px;top:400.2px;width:1px;height:406.7000000000001px;background:#e8e8e8"></div>
<div class="b" style="left:584.0px;top:400.2px;width:1px;height:406.7000000000001px;background:#e8e8e8"></div>
<div class="b" style="left:668.0px;top:400.2px;width:1px;height:406.7000000000001px;background:#e8e8e8"></div>
<div class="b" style="left:750.8px;top:400.2px;width:1px;height:406.7000000000001px;background:#e8e8e8"></div>
<div class="b" style="left:814.8px;top:400.2px;width:1px;height:406.7000000000001px;background:#e8e8e8"></div>
<div class="b" style="left:897.7px;top:400.2px;width:1px;height:406.7000000000001px;background:#e8e8e8"></div>
<div class="b" style="left:963.8px;top:400.2px;width:1px;height:406.7000000000001px;background:#e8e8e8"></div>
<div class="b" style="left:1031.1px;top:400.2px;width:1px;height:406.7000000000001px;background:#e8e8e8"></div>
<div class="b" style="left:1081.3px;top:400.2px;width:1px;height:406.7000000000001px;background:#e8e8e8"></div>
<div class="b" style="left:1130.8px;top:400.2px;width:1px;height:406.7000000000001px;background:#e8e8e8"></div>
<div class="b" style="left:1180.7px;top:400.2px;width:1px;height:406.7000000000001px;background:#e8e8e8"></div>
<div class="b" style="left:1230.6px;top:400.2px;width:1px;height:406.7000000000001px;background:#e8e8e8"></div>
<div class="b" style="left:1281.0px;top:400.2px;width:1px;height:406.7000000000001px;background:#e8e8e8"></div>
<div class="b" style="left:1330.9px;top:400.2px;width:1px;height:406.7000000000001px;background:#e8e8e8"></div>
<div class="b" style="left:1380.9px;top:400.2px;width:1px;height:406.7000000000001px;background:#e8e8e8"></div>
<div class="b" style="left:1431.2px;top:400.2px;width:1px;height:406.7000000000001px;background:#e8e8e8"></div>
<div class="b" style="left:1490.5px;top:400.2px;width:1px;height:406.7000000000001px;background:#e8e8e8"></div>
<div class="b" style="left:1579.8px;top:400.2px;width:1px;height:406.7000000000001px;background:#e8e8e8"></div>
<div class="b" style="left:1697.5px;top:400.2px;width:1px;height:406.7000000000001px;background:#e8e8e8"></div>
<div class="b" style="left:1747.1px;top:400.2px;width:1px;height:406.7000000000001px;background:#e8e8e8"></div>
<div class="b" style="left:429px;top:400.2px;width:1px;height:406.7000000000001px;background:#e8e8e8"></div>
<div class="b" style="left:429px;top:440.37px;width:1364.5px;height:1px;background:#e8e8e8"></div>
<div class="b" style="left:448.5px;top:413.78499999999997px;width:13.5px;height:13.5px;border:1px solid #d9d9d9;border-radius:2px;background:#fff"></div>
<div class="ct" style="left:488px;top:411.03499999999997px;width:33px;height:19px;background:#87d068;border-radius:3px;color:#fff;font-size:10.5px;padding-bottom:2px">在线</div>
<div class="ct" style="left:545px;top:412.03499999999997px;width:23px;height:18px;background:#87d068;border-radius:3px;color:#fff;font-size:11px;padding-bottom:1.5px">末</div>
<div class="ct" style="left:584.5px;top:400.2px;width:84.0px;height:40.670000000000016px;font-size:12px;color:#333;font-weight:normal;"><span style="letter-spacing:-0.45px">1#</span></div>
<div class="ct" style="left:668.5px;top:400.2px;width:82.79999999999995px;height:40.670000000000016px;font-size:12px;color:#333;font-weight:normal;"><span style="letter-spacing:-0.45px">1-1-1001</span></div>
<div class="ct" style="left:751.3px;top:400.2px;width:64.0px;height:40.670000000000016px;font-size:12px;color:#333;font-weight:normal;"><span style="letter-spacing:-0.45px">23000668</span></div>
<div class="ct" style="left:815.3px;top:400.2px;width:82.90000000000009px;height:40.670000000000016px;font-size:12px;color:#333;font-weight:normal;letter-spacing:-0.40px;">合闸</div>
<div class="ct" style="left:985px;top:411.53499999999997px;width:19px;height:18px;background:#ff5500;border-radius:3px;color:#fff;font-size:10px;font-weight:bold">0</div>
<div class="ct" style="left:1031.6px;top:400.2px;width:50.200000000000045px;height:40.670000000000016px;font-size:12px;color:#333;font-weight:normal;"><span style="letter-spacing:-0.45px">0</span></div>
<div class="ct" style="left:1081.8px;top:400.2px;width:49.5px;height:40.670000000000016px;font-size:12px;color:#333;font-weight:normal;"><span style="letter-spacing:-0.45px">0</span></div>
<div class="ct" style="left:1131.3px;top:400.2px;width:49.90000000000009px;height:40.670000000000016px;font-size:12px;color:#333;font-weight:normal;"><span style="letter-spacing:-0.45px">0</span></div>
<div class="ct" style="left:1181.2px;top:400.2px;width:49.899999999999864px;height:40.670000000000016px;font-size:12px;color:#333;font-weight:normal;"><span style="letter-spacing:-0.45px">0</span></div>
<div class="ct" style="left:1231.1px;top:400.2px;width:50.40000000000009px;height:40.670000000000016px;font-size:12px;color:#333;font-weight:normal;"><span style="letter-spacing:-0.45px">0</span></div>
<div class="ct" style="left:1281.5px;top:400.2px;width:49.90000000000009px;height:40.670000000000016px;font-size:12px;color:#333;font-weight:normal;"><span style="letter-spacing:-0.45px">232</span></div>
<div class="ct" style="left:1331.4px;top:400.2px;width:50.0px;height:40.670000000000016px;font-size:12px;color:#333;font-weight:normal;"><span style="letter-spacing:-0.45px">0</span></div>
<div class="ct" style="left:1381.4px;top:400.2px;width:50.299999999999955px;height:40.670000000000016px;font-size:12px;color:#333;font-weight:normal;"><span style="letter-spacing:-0.45px">0</span></div>
<div class="ct" style="left:1431.7px;top:400.2px;width:59.299999999999955px;height:40.670000000000016px;font-size:12px;color:#333;font-weight:normal;"><span style="letter-spacing:-0.45px">1</span></div>
<div class="ct" style="left:1491px;top:400.2px;width:89.29999999999995px;height:40.670000000000016px;font-size:12px;color:#333;font-weight:normal;"><span style="letter-spacing:-0.45px">230407050557</span></div>
<div class="ct" style="left:1580.3px;top:400.2px;width:117.70000000000005px;height:40.670000000000016px;font-size:12px;color:#333;font-weight:normal;"><span style="letter-spacing:-0.45px">2023-07-03 14:00:31</span></div>
<div class="ct" style="left:1698px;top:400.2px;width:49.59999999999991px;height:40.670000000000016px;font-size:12px;color:#333;font-weight:normal;"><span style="letter-spacing:-0.45px">10</span></div>
<div class="ct" style="left:1747.6px;top:400.2px;width:45.90000000000009px;height:40.670000000000016px;font-size:12px;color:#333;font-weight:normal;"><span style="letter-spacing:-0.45px">1</span></div>
<div class="b" style="left:429px;top:481.04px;width:1364.5px;height:1px;background:#e8e8e8"></div>
<div class="b" style="left:448.5px;top:454.455px;width:13.5px;height:13.5px;border:1px solid #d9d9d9;border-radius:2px;background:#fff"></div>
<div class="ct" style="left:488px;top:451.705px;width:33px;height:19px;background:#87d068;border-radius:3px;color:#fff;font-size:10.5px;padding-bottom:2px">在线</div>
<div class="ct" style="left:545px;top:452.705px;width:23px;height:18px;background:#87d068;border-radius:3px;color:#fff;font-size:11px;padding-bottom:1.5px">末</div>
<div class="ct" style="left:584.5px;top:440.87px;width:84.0px;height:40.670000000000016px;font-size:12px;color:#333;font-weight:normal;"><span style="letter-spacing:-0.45px">1#</span></div>
<div class="ct" style="left:668.5px;top:440.87px;width:82.79999999999995px;height:40.670000000000016px;font-size:12px;color:#333;font-weight:normal;"><span style="letter-spacing:-0.45px">1-1-1002</span></div>
<div class="ct" style="left:751.3px;top:440.87px;width:64.0px;height:40.670000000000016px;font-size:12px;color:#333;font-weight:normal;"><span style="letter-spacing:-0.45px">23000669</span></div>
<div class="ct" style="left:815.3px;top:440.87px;width:82.90000000000009px;height:40.670000000000016px;font-size:12px;color:#333;font-weight:normal;letter-spacing:-0.40px;">合闸功率超限</div>
<div class="ct" style="left:985px;top:452.205px;width:19px;height:18px;background:#ff5500;border-radius:3px;color:#fff;font-size:10px;font-weight:bold">0</div>
<div class="ct" style="left:1031.6px;top:440.87px;width:50.200000000000045px;height:40.670000000000016px;font-size:12px;color:#333;font-weight:normal;"><span style="letter-spacing:-0.45px">4.87</span></div>
<div class="ct" style="left:1081.8px;top:440.87px;width:49.5px;height:40.670000000000016px;font-size:12px;color:#333;font-weight:normal;"><span style="letter-spacing:-0.45px">0</span></div>
<div class="ct" style="left:1131.3px;top:440.87px;width:49.90000000000009px;height:40.670000000000016px;font-size:12px;color:#333;font-weight:normal;"><span style="letter-spacing:-0.45px">1.66</span></div>
<div class="ct" style="left:1181.2px;top:440.87px;width:49.899999999999864px;height:40.670000000000016px;font-size:12px;color:#333;font-weight:normal;"><span style="letter-spacing:-0.45px">1.51</span></div>
<div class="ct" style="left:1231.1px;top:440.87px;width:50.40000000000009px;height:40.670000000000016px;font-size:12px;color:#333;font-weight:normal;"><span style="letter-spacing:-0.45px">1.7</span></div>
<div class="ct" style="left:1281.5px;top:440.87px;width:49.90000000000009px;height:40.670000000000016px;font-size:12px;color:#333;font-weight:normal;"><span style="letter-spacing:-0.45px">232.4</span></div>
<div class="ct" style="left:1331.4px;top:440.87px;width:50.0px;height:40.670000000000016px;font-size:12px;color:#333;font-weight:normal;"><span style="letter-spacing:-0.45px">0.037</span></div>
<div class="ct" style="left:1381.4px;top:440.87px;width:50.299999999999955px;height:40.670000000000016px;font-size:12px;color:#333;font-weight:normal;"><span style="letter-spacing:-0.45px">0.003</span></div>
<div class="ct" style="left:1431.7px;top:440.87px;width:59.299999999999955px;height:40.670000000000016px;font-size:12px;color:#333;font-weight:normal;"><span style="letter-spacing:-0.45px">0.404</span></div>
<div class="ct" style="left:1491px;top:440.87px;width:89.29999999999995px;height:40.670000000000016px;font-size:12px;color:#333;font-weight:normal;"><span style="letter-spacing:-0.45px">230407050556</span></div>
<div class="ct" style="left:1580.3px;top:440.87px;width:117.70000000000005px;height:40.670000000000016px;font-size:12px;color:#333;font-weight:normal;"><span style="letter-spacing:-0.45px">2023-07-03 14:00:30</span></div>
<div class="ct" style="left:1698px;top:440.87px;width:49.59999999999991px;height:40.670000000000016px;font-size:12px;color:#333;font-weight:normal;"><span style="letter-spacing:-0.45px">10</span></div>
<div class="ct" style="left:1747.6px;top:440.87px;width:45.90000000000009px;height:40.670000000000016px;font-size:12px;color:#333;font-weight:normal;"><span style="letter-spacing:-0.45px">1</span></div>
<div class="b" style="left:429px;top:521.7099999999999px;width:1364.5px;height:1px;background:#e8e8e8"></div>
<div class="b" style="left:448.5px;top:495.12499999999994px;width:13.5px;height:13.5px;border:1px solid #d9d9d9;border-radius:2px;background:#fff"></div>
<div class="ct" style="left:488px;top:492.37499999999994px;width:33px;height:19px;background:#87d068;border-radius:3px;color:#fff;font-size:10.5px;padding-bottom:2px">在线</div>
<div class="ct" style="left:545px;top:493.37499999999994px;width:23px;height:18px;background:#87d068;border-radius:3px;color:#fff;font-size:11px;padding-bottom:1.5px">末</div>
<div class="ct" style="left:584.5px;top:481.53999999999996px;width:84.0px;height:40.66999999999996px;font-size:12px;color:#333;font-weight:normal;"><span style="letter-spacing:-0.45px">1#</span></div>
<div class="ct" style="left:668.5px;top:481.53999999999996px;width:82.79999999999995px;height:40.66999999999996px;font-size:12px;color:#333;font-weight:normal;"><span style="letter-spacing:-0.45px">1-1-1003</span></div>
<div class="ct" style="left:751.3px;top:481.53999999999996px;width:64.0px;height:40.66999999999996px;font-size:12px;color:#333;font-weight:normal;"><span style="letter-spacing:-0.45px">23000670</span></div>
<div class="ct" style="left:815.3px;top:481.53999999999996px;width:82.90000000000009px;height:40.66999999999996px;font-size:12px;color:#333;font-weight:normal;letter-spacing:-0.40px;">合闸功率超限</div>
<div class="ct" style="left:985px;top:492.87499999999994px;width:19px;height:18px;background:#ff5500;border-radius:3px;color:#fff;font-size:10px;font-weight:bold">0</div>
<div class="ct" style="left:1031.6px;top:481.53999999999996px;width:50.200000000000045px;height:40.66999999999996px;font-size:12px;color:#333;font-weight:normal;"><span style="letter-spacing:-0.45px">4.67</span></div>
<div class="ct" style="left:1081.8px;top:481.53999999999996px;width:49.5px;height:40.66999999999996px;font-size:12px;color:#333;font-weight:normal;"><span style="letter-spacing:-0.45px">0</span></div>
<div class="ct" style="left:1131.3px;top:481.53999999999996px;width:49.90000000000009px;height:40.66999999999996px;font-size:12px;color:#333;font-weight:normal;"><span style="letter-spacing:-0.45px">1.54</span></div>
<div class="ct" style="left:1181.2px;top:481.53999999999996px;width:49.899999999999864px;height:40.66999999999996px;font-size:12px;color:#333;font-weight:normal;"><span style="letter-spacing:-0.45px">1.5</span></div>
<div class="ct" style="left:1231.1px;top:481.53999999999996px;width:50.40000000000009px;height:40.66999999999996px;font-size:12px;color:#333;font-weight:normal;"><span style="letter-spacing:-0.45px">1.63</span></div>
<div class="ct" style="left:1281.5px;top:481.53999999999996px;width:49.90000000000009px;height:40.66999999999996px;font-size:12px;color:#333;font-weight:normal;"><span style="letter-spacing:-0.45px">232.9</span></div>
<div class="ct" style="left:1331.4px;top:481.53999999999996px;width:50.0px;height:40.66999999999996px;font-size:12px;color:#333;font-weight:normal;"><span style="letter-spacing:-0.45px">0.036</span></div>
<div class="ct" style="left:1381.4px;top:481.53999999999996px;width:50.299999999999955px;height:40.66999999999996px;font-size:12px;color:#333;font-weight:normal;"><span style="letter-spacing:-0.45px">0.004</span></div>
<div class="ct" style="left:1431.7px;top:481.53999999999996px;width:59.299999999999955px;height:40.66999999999996px;font-size:12px;color:#333;font-weight:normal;"><span style="letter-spacing:-0.45px">0.414</span></div>
<div class="ct" style="left:1491px;top:481.53999999999996px;width:89.29999999999995px;height:40.66999999999996px;font-size:12px;color:#333;font-weight:normal;"><span style="letter-spacing:-0.45px">230407050553</span></div>
<div class="ct" style="left:1580.3px;top:481.53999999999996px;width:117.70000000000005px;height:40.66999999999996px;font-size:12px;color:#333;font-weight:normal;"><span style="letter-spacing:-0.45px">2023-07-03 14:00:51</span></div>
<div class="ct" style="left:1698px;top:481.53999999999996px;width:49.59999999999991px;height:40.66999999999996px;font-size:12px;color:#333;font-weight:normal;"><span style="letter-spacing:-0.45px">10</span></div>
<div class="ct" style="left:1747.6px;top:481.53999999999996px;width:45.90000000000009px;height:40.66999999999996px;font-size:12px;color:#333;font-weight:normal;"><span style="letter-spacing:-0.45px">1</span></div>
<div class="b" style="left:429px;top:562.38px;width:1364.5px;height:1px;background:#e8e8e8"></div>
<div class="b" style="left:448.5px;top:535.7950000000001px;width:13.5px;height:13.5px;border:1px solid #d9d9d9;border-radius:2px;background:#fff"></div>
<div class="ct" style="left:488px;top:533.0450000000001px;width:33px;height:19px;background:#87d068;border-radius:3px;color:#fff;font-size:10.5px;padding-bottom:2px">在线</div>
<div class="ct" style="left:545px;top:534.0450000000001px;width:23px;height:18px;background:#87d068;border-radius:3px;color:#fff;font-size:11px;padding-bottom:1.5px">末</div>
<div class="ct" style="left:584.5px;top:522.21px;width:84.0px;height:40.66999999999996px;font-size:12px;color:#333;font-weight:normal;"><span style="letter-spacing:-0.45px">1#</span></div>
<div class="ct" style="left:668.5px;top:522.21px;width:82.79999999999995px;height:40.66999999999996px;font-size:12px;color:#333;font-weight:normal;"><span style="letter-spacing:-0.45px">1-1-1004</span></div>
<div class="ct" style="left:751.3px;top:522.21px;width:64.0px;height:40.66999999999996px;font-size:12px;color:#333;font-weight:normal;"><span style="letter-spacing:-0.45px">23000671</span></div>
<div class="ct" style="left:815.3px;top:522.21px;width:82.90000000000009px;height:40.66999999999996px;font-size:12px;color:#333;font-weight:normal;letter-spacing:-0.40px;">拉闸功率超限</div>
<div class="ct" style="left:985px;top:533.5450000000001px;width:19px;height:18px;background:#ff5500;border-radius:3px;color:#fff;font-size:10px;font-weight:bold">0</div>
<div class="ct" style="left:1031.6px;top:522.21px;width:50.200000000000045px;height:40.66999999999996px;font-size:12px;color:#333;font-weight:normal;"><span style="letter-spacing:-0.45px">4.76</span></div>
<div class="ct" style="left:1081.8px;top:522.21px;width:49.5px;height:40.66999999999996px;font-size:12px;color:#333;font-weight:normal;"><span style="letter-spacing:-0.45px">0</span></div>
<div class="ct" style="left:1131.3px;top:522.21px;width:49.90000000000009px;height:40.66999999999996px;font-size:12px;color:#333;font-weight:normal;"><span style="letter-spacing:-0.45px">1.52</span></div>
<div class="ct" style="left:1181.2px;top:522.21px;width:49.899999999999864px;height:40.66999999999996px;font-size:12px;color:#333;font-weight:normal;"><span style="letter-spacing:-0.45px">1.57</span></div>
<div class="ct" style="left:1231.1px;top:522.21px;width:50.40000000000009px;height:40.66999999999996px;font-size:12px;color:#333;font-weight:normal;"><span style="letter-spacing:-0.45px">1.67</span></div>
<div class="ct" style="left:1281.5px;top:522.21px;width:49.90000000000009px;height:40.66999999999996px;font-size:12px;color:#333;font-weight:normal;"><span style="letter-spacing:-0.45px">233.4</span></div>
<div class="ct" style="left:1331.4px;top:522.21px;width:50.0px;height:40.66999999999996px;font-size:12px;color:#333;font-weight:normal;"><span style="letter-spacing:-0.45px">0.037</span></div>
<div class="ct" style="left:1381.4px;top:522.21px;width:50.299999999999955px;height:40.66999999999996px;font-size:12px;color:#333;font-weight:normal;"><span style="letter-spacing:-0.45px">0.004</span></div>
<div class="ct" style="left:1431.7px;top:522.21px;width:59.299999999999955px;height:40.66999999999996px;font-size:12px;color:#333;font-weight:normal;"><span style="letter-spacing:-0.45px">0.414</span></div>
<div class="ct" style="left:1491px;top:522.21px;width:89.29999999999995px;height:40.66999999999996px;font-size:12px;color:#333;font-weight:normal;"><span style="letter-spacing:-0.45px">230407050039</span></div>
<div class="ct" style="left:1580.3px;top:522.21px;width:117.70000000000005px;height:40.66999999999996px;font-size:12px;color:#333;font-weight:normal;"><span style="letter-spacing:-0.45px">2023-07-03 14:00:49</span></div>
<div class="ct" style="left:1698px;top:522.21px;width:49.59999999999991px;height:40.66999999999996px;font-size:12px;color:#333;font-weight:normal;"><span style="letter-spacing:-0.45px">10</span></div>
<div class="ct" style="left:1747.6px;top:522.21px;width:45.90000000000009px;height:40.66999999999996px;font-size:12px;color:#333;font-weight:normal;"><span style="letter-spacing:-0.45px">1</span></div>
<div class="b" style="left:429px;top:603.05px;width:1364.5px;height:1px;background:#e8e8e8"></div>
<div class="b" style="left:448.5px;top:576.465px;width:13.5px;height:13.5px;border:1px solid #d9d9d9;border-radius:2px;background:#fff"></div>
<div class="ct" style="left:488px;top:573.715px;width:33px;height:19px;background:#87d068;border-radius:3px;color:#fff;font-size:10.5px;padding-bottom:2px">在线</div>
<div class="ct" style="left:545px;top:574.715px;width:23px;height:18px;background:#87d068;border-radius:3px;color:#fff;font-size:11px;padding-bottom:1.5px">末</div>
<div class="ct" style="left:584.5px;top:562.88px;width:84.0px;height:40.66999999999996px;font-size:12px;color:#333;font-weight:normal;"><span style="letter-spacing:-0.45px">1#</span></div>
<div class="ct" style="left:668.5px;top:562.88px;width:82.79999999999995px;height:40.66999999999996px;font-size:12px;color:#333;font-weight:normal;"><span style="letter-spacing:-0.45px">1-1-1005</span></div>
<div class="ct" style="left:751.3px;top:562.88px;width:64.0px;height:40.66999999999996px;font-size:12px;color:#333;font-weight:normal;"><span style="letter-spacing:-0.45px">23000672</span></div>
<div class="ct" style="left:815.3px;top:562.88px;width:82.90000000000009px;height:40.66999999999996px;font-size:12px;color:#333;font-weight:normal;letter-spacing:-0.40px;">合闸</div>
<div class="ct" style="left:985px;top:574.215px;width:19px;height:18px;background:#ff5500;border-radius:3px;color:#fff;font-size:10px;font-weight:bold">0</div>
<div class="ct" style="left:1031.6px;top:562.88px;width:50.200000000000045px;height:40.66999999999996px;font-size:12px;color:#333;font-weight:normal;"><span style="letter-spacing:-0.45px">4.66</span></div>
<div class="ct" style="left:1081.8px;top:562.88px;width:49.5px;height:40.66999999999996px;font-size:12px;color:#333;font-weight:normal;"><span style="letter-spacing:-0.45px">0</span></div>
<div class="ct" style="left:1131.3px;top:562.88px;width:49.90000000000009px;height:40.66999999999996px;font-size:12px;color:#333;font-weight:normal;"><span style="letter-spacing:-0.45px">1.52</span></div>
<div class="ct" style="left:1181.2px;top:562.88px;width:49.899999999999864px;height:40.66999999999996px;font-size:12px;color:#333;font-weight:normal;"><span style="letter-spacing:-0.45px">1.48</span></div>
<div class="ct" style="left:1231.1px;top:562.88px;width:50.40000000000009px;height:40.66999999999996px;font-size:12px;color:#333;font-weight:normal;"><span style="letter-spacing:-0.45px">1.66</span></div>
<div class="ct" style="left:1281.5px;top:562.88px;width:49.90000000000009px;height:40.66999999999996px;font-size:12px;color:#333;font-weight:normal;"><span style="letter-spacing:-0.45px">233.5</span></div>
<div class="ct" style="left:1331.4px;top:562.88px;width:50.0px;height:40.66999999999996px;font-size:12px;color:#333;font-weight:normal;"><span style="letter-spacing:-0.45px">0.036</span></div>
<div class="ct" style="left:1381.4px;top:562.88px;width:50.299999999999955px;height:40.66999999999996px;font-size:12px;color:#333;font-weight:normal;"><span style="letter-spacing:-0.45px">0.004</span></div>
<div class="ct" style="left:1431.7px;top:562.88px;width:59.299999999999955px;height:40.66999999999996px;font-size:12px;color:#333;font-weight:normal;"><span style="letter-spacing:-0.45px">0.426</span></div>
<div class="ct" style="left:1491px;top:562.88px;width:89.29999999999995px;height:40.66999999999996px;font-size:12px;color:#333;font-weight:normal;"><span style="letter-spacing:-0.45px">230407050554</span></div>
<div class="ct" style="left:1580.3px;top:562.88px;width:117.70000000000005px;height:40.66999999999996px;font-size:12px;color:#333;font-weight:normal;"><span style="letter-spacing:-0.45px">2023-07-03 14:00:28</span></div>
<div class="ct" style="left:1698px;top:562.88px;width:49.59999999999991px;height:40.66999999999996px;font-size:12px;color:#333;font-weight:normal;"><span style="letter-spacing:-0.45px">10</span></div>
<div class="ct" style="left:1747.6px;top:562.88px;width:45.90000000000009px;height:40.66999999999996px;font-size:12px;color:#333;font-weight:normal;"><span style="letter-spacing:-0.45px">1</span></div>
<div class="b" style="left:429px;top:643.7199999999999px;width:1364.5px;height:1px;background:#e8e8e8"></div>
<div class="b" style="left:448.5px;top:617.135px;width:13.5px;height:13.5px;border:1px solid #d9d9d9;border-radius:2px;background:#fff"></div>
<div class="ct" style="left:488px;top:614.385px;width:33px;height:19px;background:#87d068;border-radius:3px;color:#fff;font-size:10.5px;padding-bottom:2px">在线</div>
<div class="ct" style="left:545px;top:615.385px;width:23px;height:18px;background:#87d068;border-radius:3px;color:#fff;font-size:11px;padding-bottom:1.5px">末</div>
<div class="ct" style="left:584.5px;top:603.55px;width:84.0px;height:40.66999999999996px;font-size:12px;color:#333;font-weight:normal;"><span style="letter-spacing:-0.45px">1#</span></div>
<div class="ct" style="left:668.5px;top:603.55px;width:82.79999999999995px;height:40.66999999999996px;font-size:12px;color:#333;font-weight:normal;"><span style="letter-spacing:-0.45px">1-1-1006</span></div>
<div class="ct" style="left:751.3px;top:603.55px;width:64.0px;height:40.66999999999996px;font-size:12px;color:#333;font-weight:normal;"><span style="letter-spacing:-0.45px">23000673</span></div>
<div class="ct" style="left:815.3px;top:603.55px;width:82.90000000000009px;height:40.66999999999996px;font-size:12px;color:#333;font-weight:normal;letter-spacing:-0.40px;">拉闸功率超限</div>
<div class="ct" style="left:985px;top:614.885px;width:19px;height:18px;background:#ff5500;border-radius:3px;color:#fff;font-size:10px;font-weight:bold">0</div>
<div class="ct" style="left:1031.6px;top:603.55px;width:50.200000000000045px;height:40.66999999999996px;font-size:12px;color:#333;font-weight:normal;"><span style="letter-spacing:-0.45px">2.6</span></div>
<div class="ct" style="left:1081.8px;top:603.55px;width:49.5px;height:40.66999999999996px;font-size:12px;color:#333;font-weight:normal;"><span style="letter-spacing:-0.45px">0</span></div>
<div class="ct" style="left:1131.3px;top:603.55px;width:49.90000000000009px;height:40.66999999999996px;font-size:12px;color:#333;font-weight:normal;"><span style="letter-spacing:-0.45px">0.88</span></div>
<div class="ct" style="left:1181.2px;top:603.55px;width:49.899999999999864px;height:40.66999999999996px;font-size:12px;color:#333;font-weight:normal;"><span style="letter-spacing:-0.45px">0.85</span></div>
<div class="ct" style="left:1231.1px;top:603.55px;width:50.40000000000009px;height:40.66999999999996px;font-size:12px;color:#333;font-weight:normal;"><span style="letter-spacing:-0.45px">0.87</span></div>
<div class="ct" style="left:1281.5px;top:603.55px;width:49.90000000000009px;height:40.66999999999996px;font-size:12px;color:#333;font-weight:normal;"><span style="letter-spacing:-0.45px">233.3</span></div>
<div class="ct" style="left:1331.4px;top:603.55px;width:50.0px;height:40.66999999999996px;font-size:12px;color:#333;font-weight:normal;"><span style="letter-spacing:-0.45px">0.037</span></div>
<div class="ct" style="left:1381.4px;top:603.55px;width:50.299999999999955px;height:40.66999999999996px;font-size:12px;color:#333;font-weight:normal;"><span style="letter-spacing:-0.45px">0.003</span></div>
<div class="ct" style="left:1431.7px;top:603.55px;width:59.299999999999955px;height:40.66999999999996px;font-size:12px;color:#333;font-weight:normal;"><span style="letter-spacing:-0.45px">0.418</span></div>
<div class="ct" style="left:1491px;top:603.55px;width:89.29999999999995px;height:40.66999999999996px;font-size:12px;color:#333;font-weight:normal;"><span style="letter-spacing:-0.45px">230407050548</span></div>
<div class="ct" style="left:1580.3px;top:603.55px;width:117.70000000000005px;height:40.66999999999996px;font-size:12px;color:#333;font-weight:normal;"><span style="letter-spacing:-0.45px">2023-07-03 14:00:07</span></div>
<div class="ct" style="left:1698px;top:603.55px;width:49.59999999999991px;height:40.66999999999996px;font-size:12px;color:#333;font-weight:normal;"><span style="letter-spacing:-0.45px">10</span></div>
<div class="ct" style="left:1747.6px;top:603.55px;width:45.90000000000009px;height:40.66999999999996px;font-size:12px;color:#333;font-weight:normal;"><span style="letter-spacing:-0.45px">1</span></div>
<div class="b" style="left:429px;top:684.39px;width:1364.5px;height:1px;background:#e8e8e8"></div>
<div class="b" style="left:448.5px;top:657.8050000000001px;width:13.5px;height:13.5px;border:1px solid #d9d9d9;border-radius:2px;background:#fff"></div>
<div class="ct" style="left:488px;top:655.0550000000001px;width:33px;height:19px;background:#87d068;border-radius:3px;color:#fff;font-size:10.5px;padding-bottom:2px">在线</div>
<div class="ct" style="left:545px;top:656.0550000000001px;width:23px;height:18px;background:#87d068;border-radius:3px;color:#fff;font-size:11px;padding-bottom:1.5px">末</div>
<div class="ct" style="left:584.5px;top:644.22px;width:84.0px;height:40.66999999999996px;font-size:12px;color:#333;font-weight:normal;"><span style="letter-spacing:-0.45px">1#</span></div>
<div class="ct" style="left:668.5px;top:644.22px;width:82.79999999999995px;height:40.66999999999996px;font-size:12px;color:#333;font-weight:normal;"><span style="letter-spacing:-0.45px">1-1-1007</span></div>
<div class="ct" style="left:751.3px;top:644.22px;width:64.0px;height:40.66999999999996px;font-size:12px;color:#333;font-weight:normal;"><span style="letter-spacing:-0.45px">23000674</span></div>
<div class="ct" style="left:815.3px;top:644.22px;width:82.90000000000009px;height:40.66999999999996px;font-size:12px;color:#333;font-weight:normal;letter-spacing:-0.40px;">合闸功率超限</div>
<div class="ct" style="left:985px;top:655.5550000000001px;width:19px;height:18px;background:#ff5500;border-radius:3px;color:#fff;font-size:10px;font-weight:bold">0</div>
<div class="ct" style="left:1031.6px;top:644.22px;width:50.200000000000045px;height:40.66999999999996px;font-size:12px;color:#333;font-weight:normal;"><span style="letter-spacing:-0.45px">4.71</span></div>
<div class="ct" style="left:1081.8px;top:644.22px;width:49.5px;height:40.66999999999996px;font-size:12px;color:#333;font-weight:normal;"><span style="letter-spacing:-0.45px">0</span></div>
<div class="ct" style="left:1131.3px;top:644.22px;width:49.90000000000009px;height:40.66999999999996px;font-size:12px;color:#333;font-weight:normal;"><span style="letter-spacing:-0.45px">1.52</span></div>
<div class="ct" style="left:1181.2px;top:644.22px;width:49.899999999999864px;height:40.66999999999996px;font-size:12px;color:#333;font-weight:normal;"><span style="letter-spacing:-0.45px">1.56</span></div>
<div class="ct" style="left:1231.1px;top:644.22px;width:50.40000000000009px;height:40.66999999999996px;font-size:12px;color:#333;font-weight:normal;"><span style="letter-spacing:-0.45px">1.63</span></div>
<div class="ct" style="left:1281.5px;top:644.22px;width:49.90000000000009px;height:40.66999999999996px;font-size:12px;color:#333;font-weight:normal;"><span style="letter-spacing:-0.45px">233.3</span></div>
<div class="ct" style="left:1331.4px;top:644.22px;width:50.0px;height:40.66999999999996px;font-size:12px;color:#333;font-weight:normal;"><span style="letter-spacing:-0.45px">0.037</span></div>
<div class="ct" style="left:1381.4px;top:644.22px;width:50.299999999999955px;height:40.66999999999996px;font-size:12px;color:#333;font-weight:normal;"><span style="letter-spacing:-0.45px">0.004</span></div>
<div class="ct" style="left:1431.7px;top:644.22px;width:59.299999999999955px;height:40.66999999999996px;font-size:12px;color:#333;font-weight:normal;"><span style="letter-spacing:-0.45px">0.423</span></div>
<div class="ct" style="left:1491px;top:644.22px;width:89.29999999999995px;height:40.66999999999996px;font-size:12px;color:#333;font-weight:normal;"><span style="letter-spacing:-0.45px">230407050547</span></div>
<div class="ct" style="left:1580.3px;top:644.22px;width:117.70000000000005px;height:40.66999999999996px;font-size:12px;color:#333;font-weight:normal;"><span style="letter-spacing:-0.45px">2023-07-03 14:00:05</span></div>
<div class="ct" style="left:1698px;top:644.22px;width:49.59999999999991px;height:40.66999999999996px;font-size:12px;color:#333;font-weight:normal;"><span style="letter-spacing:-0.45px">10</span></div>
<div class="ct" style="left:1747.6px;top:644.22px;width:45.90000000000009px;height:40.66999999999996px;font-size:12px;color:#333;font-weight:normal;"><span style="letter-spacing:-0.45px">1</span></div>
<div class="b" style="left:429px;top:725.06px;width:1364.5px;height:1px;background:#e8e8e8"></div>
<div class="b" style="left:448.5px;top:698.475px;width:13.5px;height:13.5px;border:1px solid #d9d9d9;border-radius:2px;background:#fff"></div>
<div class="ct" style="left:488px;top:695.725px;width:33px;height:19px;background:#87d068;border-radius:3px;color:#fff;font-size:10.5px;padding-bottom:2px">在线</div>
<div class="ct" style="left:545px;top:696.725px;width:23px;height:18px;background:#87d068;border-radius:3px;color:#fff;font-size:11px;padding-bottom:1.5px">末</div>
<div class="ct" style="left:584.5px;top:684.89px;width:84.0px;height:40.66999999999996px;font-size:12px;color:#333;font-weight:normal;"><span style="letter-spacing:-0.45px">1#</span></div>
<div class="ct" style="left:668.5px;top:684.89px;width:82.79999999999995px;height:40.66999999999996px;font-size:12px;color:#333;font-weight:normal;"><span style="letter-spacing:-0.45px">1-1-1008</span></div>
<div class="ct" style="left:751.3px;top:684.89px;width:64.0px;height:40.66999999999996px;font-size:12px;color:#333;font-weight:normal;"><span style="letter-spacing:-0.45px">23000675</span></div>
<div class="ct" style="left:815.3px;top:684.89px;width:82.90000000000009px;height:40.66999999999996px;font-size:12px;color:#333;font-weight:normal;letter-spacing:-0.40px;">合闸功率超限</div>
<div class="ct" style="left:985px;top:696.225px;width:19px;height:18px;background:#ff5500;border-radius:3px;color:#fff;font-size:10px;font-weight:bold">0</div>
<div class="ct" style="left:1031.6px;top:684.89px;width:50.200000000000045px;height:40.66999999999996px;font-size:12px;color:#333;font-weight:normal;"><span style="letter-spacing:-0.45px">4.86</span></div>
<div class="ct" style="left:1081.8px;top:684.89px;width:49.5px;height:40.66999999999996px;font-size:12px;color:#333;font-weight:normal;"><span style="letter-spacing:-0.45px">0</span></div>
<div class="ct" style="left:1131.3px;top:684.89px;width:49.90000000000009px;height:40.66999999999996px;font-size:12px;color:#333;font-weight:normal;"><span style="letter-spacing:-0.45px">1.65</span></div>
<div class="ct" style="left:1181.2px;top:684.89px;width:49.899999999999864px;height:40.66999999999996px;font-size:12px;color:#333;font-weight:normal;"><span style="letter-spacing:-0.45px">1.58</span></div>
<div class="ct" style="left:1231.1px;top:684.89px;width:50.40000000000009px;height:40.66999999999996px;font-size:12px;color:#333;font-weight:normal;"><span style="letter-spacing:-0.45px">1.63</span></div>
<div class="ct" style="left:1281.5px;top:684.89px;width:49.90000000000009px;height:40.66999999999996px;font-size:12px;color:#333;font-weight:normal;"><span style="letter-spacing:-0.45px">233.2</span></div>
<div class="ct" style="left:1331.4px;top:684.89px;width:50.0px;height:40.66999999999996px;font-size:12px;color:#333;font-weight:normal;"><span style="letter-spacing:-0.45px">0.036</span></div>
<div class="ct" style="left:1381.4px;top:684.89px;width:50.299999999999955px;height:40.66999999999996px;font-size:12px;color:#333;font-weight:normal;"><span style="letter-spacing:-0.45px">0.004</span></div>
<div class="ct" style="left:1431.7px;top:684.89px;width:59.299999999999955px;height:40.66999999999996px;font-size:12px;color:#333;font-weight:normal;"><span style="letter-spacing:-0.45px">0.422</span></div>
<div class="ct" style="left:1491px;top:684.89px;width:89.29999999999995px;height:40.66999999999996px;font-size:12px;color:#333;font-weight:normal;"><span style="letter-spacing:-0.45px">230407050552</span></div>
<div class="ct" style="left:1580.3px;top:684.89px;width:117.70000000000005px;height:40.66999999999996px;font-size:12px;color:#333;font-weight:normal;"><span style="letter-spacing:-0.45px">2023-07-03 14:00:11</span></div>
<div class="ct" style="left:1698px;top:684.89px;width:49.59999999999991px;height:40.66999999999996px;font-size:12px;color:#333;font-weight:normal;"><span style="letter-spacing:-0.45px">10</span></div>
<div class="ct" style="left:1747.6px;top:684.89px;width:45.90000000000009px;height:40.66999999999996px;font-size:12px;color:#333;font-weight:normal;"><span style="letter-spacing:-0.45px">1</span></div>
<div class="b" style="left:429px;top:765.7299999999999px;width:1364.5px;height:1px;background:#e8e8e8"></div>
<div class="b" style="left:448.5px;top:739.145px;width:13.5px;height:13.5px;border:1px solid #d9d9d9;border-radius:2px;background:#fff"></div>
<div class="ct" style="left:488px;top:736.395px;width:33px;height:19px;background:#87d068;border-radius:3px;color:#fff;font-size:10.5px;padding-bottom:2px">在线</div>
<div class="ct" style="left:545px;top:737.395px;width:23px;height:18px;background:#87d068;border-radius:3px;color:#fff;font-size:11px;padding-bottom:1.5px">末</div>
<div class="ct" style="left:584.5px;top:725.56px;width:84.0px;height:40.66999999999996px;font-size:12px;color:#333;font-weight:normal;"><span style="letter-spacing:-0.45px">1#</span></div>
<div class="ct" style="left:668.5px;top:725.56px;width:82.79999999999995px;height:40.66999999999996px;font-size:12px;color:#333;font-weight:normal;"><span style="letter-spacing:-0.45px">1-1-1009</span></div>
<div class="ct" style="left:751.3px;top:725.56px;width:64.0px;height:40.66999999999996px;font-size:12px;color:#333;font-weight:normal;"><span style="letter-spacing:-0.45px">23000676</span></div>
<div class="ct" style="left:815.3px;top:725.56px;width:82.90000000000009px;height:40.66999999999996px;font-size:12px;color:#333;font-weight:normal;letter-spacing:-0.40px;">合闸功率超限</div>
<div class="ct" style="left:985px;top:736.895px;width:19px;height:18px;background:#ff5500;border-radius:3px;color:#fff;font-size:10px;font-weight:bold">0</div>
<div class="ct" style="left:1031.6px;top:725.56px;width:50.200000000000045px;height:40.66999999999996px;font-size:12px;color:#333;font-weight:normal;"><span style="letter-spacing:-0.45px">4.72</span></div>
<div class="ct" style="left:1081.8px;top:725.56px;width:49.5px;height:40.66999999999996px;font-size:12px;color:#333;font-weight:normal;"><span style="letter-spacing:-0.45px">0</span></div>
<div class="ct" style="left:1131.3px;top:725.56px;width:49.90000000000009px;height:40.66999999999996px;font-size:12px;color:#333;font-weight:normal;"><span style="letter-spacing:-0.45px">1.57</span></div>
<div class="ct" style="left:1181.2px;top:725.56px;width:49.899999999999864px;height:40.66999999999996px;font-size:12px;color:#333;font-weight:normal;"><span style="letter-spacing:-0.45px">1.54</span></div>
<div class="ct" style="left:1231.1px;top:725.56px;width:50.40000000000009px;height:40.66999999999996px;font-size:12px;color:#333;font-weight:normal;"><span style="letter-spacing:-0.45px">1.61</span></div>
<div class="ct" style="left:1281.5px;top:725.56px;width:49.90000000000009px;height:40.66999999999996px;font-size:12px;color:#333;font-weight:normal;"><span style="letter-spacing:-0.45px">233.1</span></div>
<div class="ct" style="left:1331.4px;top:725.56px;width:50.0px;height:40.66999999999996px;font-size:12px;color:#333;font-weight:normal;"><span style="letter-spacing:-0.45px">0.036</span></div>
<div class="ct" style="left:1381.4px;top:725.56px;width:50.299999999999955px;height:40.66999999999996px;font-size:12px;color:#333;font-weight:normal;"><span style="letter-spacing:-0.45px">0.003</span></div>
<div class="ct" style="left:1431.7px;top:725.56px;width:59.299999999999955px;height:40.66999999999996px;font-size:12px;color:#333;font-weight:normal;"><span style="letter-spacing:-0.45px">0.423</span></div>
<div class="ct" style="left:1491px;top:725.56px;width:89.29999999999995px;height:40.66999999999996px;font-size:12px;color:#333;font-weight:normal;"><span style="letter-spacing:-0.45px">230407050549</span></div>
<div class="ct" style="left:1580.3px;top:725.56px;width:117.70000000000005px;height:40.66999999999996px;font-size:12px;color:#333;font-weight:normal;"><span style="letter-spacing:-0.45px">2023-07-03 14:00:09</span></div>
<div class="ct" style="left:1698px;top:725.56px;width:49.59999999999991px;height:40.66999999999996px;font-size:12px;color:#333;font-weight:normal;"><span style="letter-spacing:-0.45px">10</span></div>
<div class="ct" style="left:1747.6px;top:725.56px;width:45.90000000000009px;height:40.66999999999996px;font-size:12px;color:#333;font-weight:normal;"><span style="letter-spacing:-0.45px">1</span></div>
<div class="b" style="left:429px;top:806.4px;width:1364.5px;height:1px;background:#e8e8e8"></div>
<div class="b" style="left:448.5px;top:779.815px;width:13.5px;height:13.5px;border:1px solid #d9d9d9;border-radius:2px;background:#fff"></div>
<div class="ct" style="left:488px;top:777.065px;width:33px;height:19px;background:#87d068;border-radius:3px;color:#fff;font-size:10.5px;padding-bottom:2px">在线</div>
<div class="ct" style="left:545px;top:778.065px;width:23px;height:18px;background:#87d068;border-radius:3px;color:#fff;font-size:11px;padding-bottom:1.5px">末</div>
<div class="ct" style="left:584.5px;top:766.23px;width:84.0px;height:40.66999999999996px;font-size:12px;color:#333;font-weight:normal;"><span style="letter-spacing:-0.45px">1#</span></div>
<div class="ct" style="left:668.5px;top:766.23px;width:82.79999999999995px;height:40.66999999999996px;font-size:12px;color:#333;font-weight:normal;"><span style="letter-spacing:-0.45px">1-1-101</span></div>
<div class="ct" style="left:751.3px;top:766.23px;width:64.0px;height:40.66999999999996px;font-size:12px;color:#333;font-weight:normal;"><span style="letter-spacing:-0.45px">23000219</span></div>
<div class="ct" style="left:815.3px;top:766.23px;width:82.90000000000009px;height:40.66999999999996px;font-size:12px;color:#333;font-weight:normal;letter-spacing:-0.40px;">合闸功率超限</div>
<div class="ct" style="left:985px;top:777.565px;width:19px;height:18px;background:#ff5500;border-radius:3px;color:#fff;font-size:10px;font-weight:bold">0</div>
<div class="ct" style="left:1031.6px;top:766.23px;width:50.200000000000045px;height:40.66999999999996px;font-size:12px;color:#333;font-weight:normal;"><span style="letter-spacing:-0.45px">455.16</span></div>
<div class="ct" style="left:1081.8px;top:766.23px;width:49.5px;height:40.66999999999996px;font-size:12px;color:#333;font-weight:normal;"><span style="letter-spacing:-0.45px">0</span></div>
<div class="ct" style="left:1131.3px;top:766.23px;width:49.90000000000009px;height:40.66999999999996px;font-size:12px;color:#333;font-weight:normal;"><span style="letter-spacing:-0.45px">200.71</span></div>
<div class="ct" style="left:1181.2px;top:766.23px;width:49.899999999999864px;height:40.66999999999996px;font-size:12px;color:#333;font-weight:normal;"><span style="letter-spacing:-0.45px">163.36</span></div>
<div class="ct" style="left:1231.1px;top:766.23px;width:50.40000000000009px;height:40.66999999999996px;font-size:12px;color:#333;font-weight:normal;"><span style="letter-spacing:-0.45px">91.09</span></div>
<div class="ct" style="left:1281.5px;top:766.23px;width:49.90000000000009px;height:40.66999999999996px;font-size:12px;color:#333;font-weight:normal;"><span style="letter-spacing:-0.45px">231.5</span></div>
<div class="ct" style="left:1331.4px;top:766.23px;width:50.0px;height:40.66999999999996px;font-size:12px;color:#333;font-weight:normal;"><span style="letter-spacing:-0.45px">6.35</span></div>
<div class="ct" style="left:1381.4px;top:766.23px;width:50.299999999999955px;height:40.66999999999996px;font-size:12px;color:#333;font-weight:normal;"><span style="letter-spacing:-0.45px">1.452</span></div>
<div class="ct" style="left:1431.7px;top:766.23px;width:59.299999999999955px;height:40.66999999999996px;font-size:12px;color:#333;font-weight:normal;"><span style="letter-spacing:-0.45px">0.998</span></div>
<div class="ct" style="left:1491px;top:766.23px;width:89.29999999999995px;height:40.66999999999996px;font-size:12px;color:#333;font-weight:normal;"><span style="letter-spacing:-0.45px">230407050010</span></div>
<div class="ct" style="left:1580.3px;top:766.23px;width:117.70000000000005px;height:40.66999999999996px;font-size:12px;color:#333;font-weight:normal;"><span style="letter-spacing:-0.45px">2023-07-03 14:00:14</span></div>
<div class="ct" style="left:1698px;top:766.23px;width:49.59999999999991px;height:40.66999999999996px;font-size:12px;color:#333;font-weight:normal;"><span style="letter-spacing:-0.45px">1</span></div>
<div class="ct" style="left:1747.6px;top:766.23px;width:45.90000000000009px;height:40.66999999999996px;font-size:12px;color:#333;font-weight:normal;"><span style="letter-spacing:-0.45px">1</span></div>
<div class="b" style="left:429px;top:806.3px;width:1362.5px;height:5.5px;background:#c8c8c8;border-radius:3px"></div>
<div class="t" style="left:1444px;top:826.0px;font-size:12px;line-height:20px;color:#595959;font-weight:normal;"><span style="letter-spacing:-0.45px">1-10 </span>共<span style="letter-spacing:-0.45px">719</span>条</div>
<svg style="left:1523.5px;top:830.5px" width="7" height="10" viewBox="0 0 7 10"><path d="M5.8 0.8 L1.5 5 L5.8 9.2" fill="none" stroke="#bfbfbf" stroke-width="1"/></svg>
<div class="b" style="left:1537px;top:826.3px;width:20px;height:19.5px;border:1px solid #1890ff;border-radius:3px"></div>
<div class="ct" style="left:1537px;top:826.3px;width:20px;height:19.5px;font-size:12px;color:#1890ff;font-weight:normal;"><span style="letter-spacing:-0.45px">1</span></div>
<div class="ct" style="left:1557px;top:826.3px;width:20px;height:19.5px;font-size:12px;color:#595959;font-weight:normal;"><span style="letter-spacing:-0.45px">2</span></div>
<div class="ct" style="left:1577px;top:826.3px;width:20px;height:19.5px;font-size:12px;color:#595959;font-weight:normal;"><span style="letter-spacing:-0.45px">3</span></div>
<div class="ct" style="left:1597px;top:826.3px;width:20px;height:19.5px;font-size:12px;color:#595959;font-weight:normal;"><span style="letter-spacing:-0.45px">4</span></div>
<div class="ct" style="left:1617px;top:826.3px;width:20px;height:19.5px;font-size:12px;color:#595959;font-weight:normal;"><span style="letter-spacing:-0.45px">5</span></div>
<svg style="left:1641px;top:834px" width="18" height="4" viewBox="0 0 18 4"><g fill="#bfbfbf"><circle cx="2" cy="1.7" r="1.3"/><circle cx="8.5" cy="1.7" r="1.3"/><circle cx="15" cy="1.7" r="1.3"/></g></svg>
<div class="ct" style="left:1665px;top:826.3px;width:22px;height:19.5px;font-size:12px;color:#595959;font-weight:normal;"><span style="letter-spacing:-0.45px">72</span></div>
<svg style="left:1694px;top:830.5px" width="7" height="10" viewBox="0 0 7 10"><path d="M1.2 0.8 L5.5 5 L1.2 9.2" fill="none" stroke="#595959" stroke-width="1"/></svg>
<div class="t" style="left:1709px;top:830.5px;font-size:12px;line-height:20px;color:#595959;font-weight:normal;">跳至</div>
<div class="b" style="left:1739.5px;top:826.5px;width:36.5px;height:27px;border:1px solid #d9d9d9;border-radius:3px"></div>
<div class="t" style="left:1782.5px;top:830.5px;font-size:12px;line-height:20px;color:#595959;font-weight:normal;">页</div></body></html>
